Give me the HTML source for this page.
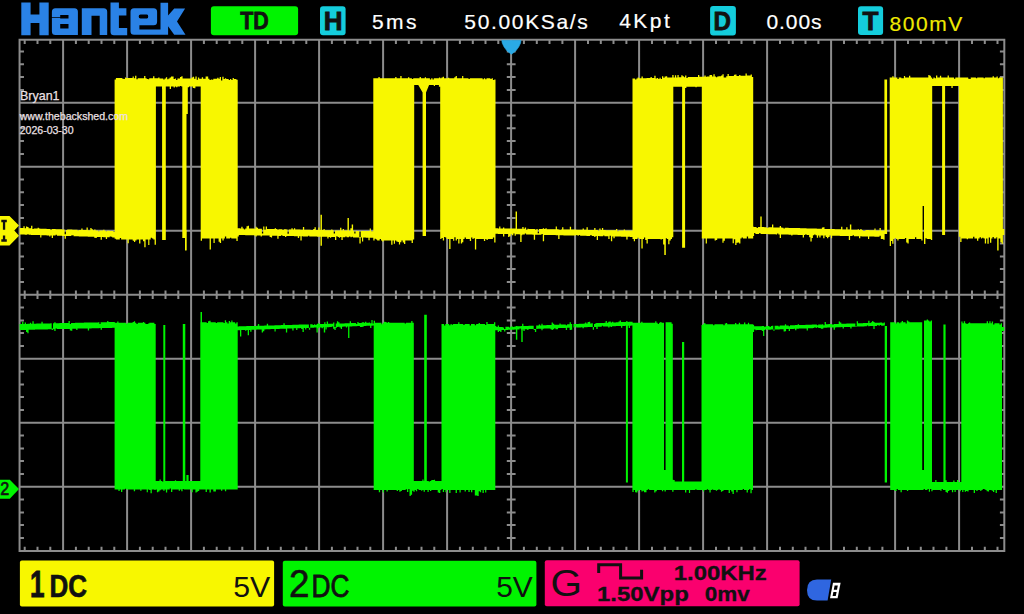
<!DOCTYPE html>
<html><head><meta charset="utf-8"><style>
html,body{margin:0;padding:0;background:#000;width:1024px;height:614px;overflow:hidden}
svg{display:block}
text{font-family:"Liberation Sans",sans-serif}
</style></head><body>
<svg width="1024" height="614" viewBox="0 0 1024 614">
<defs></defs>
<rect width="1024" height="614" fill="#000"/>
<path d="M63.1 39.8V550.9M127.1 39.8V550.9M191.1 39.8V550.9M255.1 39.8V550.9M319.1 39.8V550.9M383.1 39.8V550.9M447.1 39.8V550.9M511.1 39.8V550.9M575.1 39.8V550.9M639.1 39.8V550.9M703.1 39.8V550.9M767.1 39.8V550.9M831.1 39.8V550.9M895.1 39.8V550.9M959.1 39.8V550.9M19.56 102.8H1004.3M19.56 166.8H1004.3M19.56 230.8H1004.3M19.56 294.8H1004.3M19.56 358.8H1004.3M19.56 422.8H1004.3M19.56 486.8H1004.3M19.56 39.8H1004.3V550.9H19.56ZM24.7 39.8v4.2M24.7 550.9v-4.2M24.7 290.4v8.6M37.5 39.8v4.2M37.5 550.9v-4.2M37.5 290.4v8.6M50.3 39.8v4.2M50.3 550.9v-4.2M50.3 290.4v8.6M75.9 39.8v4.2M75.9 550.9v-4.2M75.9 290.4v8.6M88.7 39.8v4.2M88.7 550.9v-4.2M88.7 290.4v8.6M101.5 39.8v4.2M101.5 550.9v-4.2M101.5 290.4v8.6M114.3 39.8v4.2M114.3 550.9v-4.2M114.3 290.4v8.6M139.9 39.8v4.2M139.9 550.9v-4.2M139.9 290.4v8.6M152.7 39.8v4.2M152.7 550.9v-4.2M152.7 290.4v8.6M165.5 39.8v4.2M165.5 550.9v-4.2M165.5 290.4v8.6M178.3 39.8v4.2M178.3 550.9v-4.2M178.3 290.4v8.6M203.9 39.8v4.2M203.9 550.9v-4.2M203.9 290.4v8.6M216.7 39.8v4.2M216.7 550.9v-4.2M216.7 290.4v8.6M229.5 39.8v4.2M229.5 550.9v-4.2M229.5 290.4v8.6M242.3 39.8v4.2M242.3 550.9v-4.2M242.3 290.4v8.6M267.9 39.8v4.2M267.9 550.9v-4.2M267.9 290.4v8.6M280.8 39.8v4.2M280.8 550.9v-4.2M280.8 290.4v8.6M293.5 39.8v4.2M293.5 550.9v-4.2M293.5 290.4v8.6M306.3 39.8v4.2M306.3 550.9v-4.2M306.3 290.4v8.6M331.9 39.8v4.2M331.9 550.9v-4.2M331.9 290.4v8.6M344.8 39.8v4.2M344.8 550.9v-4.2M344.8 290.4v8.6M357.5 39.8v4.2M357.5 550.9v-4.2M357.5 290.4v8.6M370.3 39.8v4.2M370.3 550.9v-4.2M370.3 290.4v8.6M395.9 39.8v4.2M395.9 550.9v-4.2M395.9 290.4v8.6M408.8 39.8v4.2M408.8 550.9v-4.2M408.8 290.4v8.6M421.5 39.8v4.2M421.5 550.9v-4.2M421.5 290.4v8.6M434.3 39.8v4.2M434.3 550.9v-4.2M434.3 290.4v8.6M459.9 39.8v4.2M459.9 550.9v-4.2M459.9 290.4v8.6M472.8 39.8v4.2M472.8 550.9v-4.2M472.8 290.4v8.6M485.5 39.8v4.2M485.5 550.9v-4.2M485.5 290.4v8.6M498.3 39.8v4.2M498.3 550.9v-4.2M498.3 290.4v8.6M523.9 39.8v4.2M523.9 550.9v-4.2M523.9 290.4v8.6M536.8 39.8v4.2M536.8 550.9v-4.2M536.8 290.4v8.6M549.5 39.8v4.2M549.5 550.9v-4.2M549.5 290.4v8.6M562.4 39.8v4.2M562.4 550.9v-4.2M562.4 290.4v8.6M588.0 39.8v4.2M588.0 550.9v-4.2M588.0 290.4v8.6M600.8 39.8v4.2M600.8 550.9v-4.2M600.8 290.4v8.6M613.5 39.8v4.2M613.5 550.9v-4.2M613.5 290.4v8.6M626.4 39.8v4.2M626.4 550.9v-4.2M626.4 290.4v8.6M652.0 39.8v4.2M652.0 550.9v-4.2M652.0 290.4v8.6M664.8 39.8v4.2M664.8 550.9v-4.2M664.8 290.4v8.6M677.5 39.8v4.2M677.5 550.9v-4.2M677.5 290.4v8.6M690.4 39.8v4.2M690.4 550.9v-4.2M690.4 290.4v8.6M716.0 39.8v4.2M716.0 550.9v-4.2M716.0 290.4v8.6M728.8 39.8v4.2M728.8 550.9v-4.2M728.8 290.4v8.6M741.5 39.8v4.2M741.5 550.9v-4.2M741.5 290.4v8.6M754.4 39.8v4.2M754.4 550.9v-4.2M754.4 290.4v8.6M780.0 39.8v4.2M780.0 550.9v-4.2M780.0 290.4v8.6M792.8 39.8v4.2M792.8 550.9v-4.2M792.8 290.4v8.6M805.5 39.8v4.2M805.5 550.9v-4.2M805.5 290.4v8.6M818.4 39.8v4.2M818.4 550.9v-4.2M818.4 290.4v8.6M844.0 39.8v4.2M844.0 550.9v-4.2M844.0 290.4v8.6M856.8 39.8v4.2M856.8 550.9v-4.2M856.8 290.4v8.6M869.5 39.8v4.2M869.5 550.9v-4.2M869.5 290.4v8.6M882.4 39.8v4.2M882.4 550.9v-4.2M882.4 290.4v8.6M908.0 39.8v4.2M908.0 550.9v-4.2M908.0 290.4v8.6M920.8 39.8v4.2M920.8 550.9v-4.2M920.8 290.4v8.6M933.5 39.8v4.2M933.5 550.9v-4.2M933.5 290.4v8.6M946.4 39.8v4.2M946.4 550.9v-4.2M946.4 290.4v8.6M972.0 39.8v4.2M972.0 550.9v-4.2M972.0 290.4v8.6M984.8 39.8v4.2M984.8 550.9v-4.2M984.8 290.4v8.6M997.5 39.8v4.2M997.5 550.9v-4.2M997.5 290.4v8.6M19.56 51.5h4.4M1004.3 51.5h-4.4M506.8 51.5h8.8M19.56 64.3h4.4M1004.3 64.3h-4.4M506.8 64.3h8.8M19.56 77.1h4.4M1004.3 77.1h-4.4M506.8 77.1h8.8M19.56 89.9h4.4M1004.3 89.9h-4.4M506.8 89.9h8.8M19.56 115.5h4.4M1004.3 115.5h-4.4M506.8 115.5h8.8M19.56 128.3h4.4M1004.3 128.3h-4.4M506.8 128.3h8.8M19.56 141.1h4.4M1004.3 141.1h-4.4M506.8 141.1h8.8M19.56 153.9h4.4M1004.3 153.9h-4.4M506.8 153.9h8.8M19.56 179.6h4.4M1004.3 179.6h-4.4M506.8 179.6h8.8M19.56 192.3h4.4M1004.3 192.3h-4.4M506.8 192.3h8.8M19.56 205.1h4.4M1004.3 205.1h-4.4M506.8 205.1h8.8M19.56 217.9h4.4M1004.3 217.9h-4.4M506.8 217.9h8.8M19.56 243.6h4.4M1004.3 243.6h-4.4M506.8 243.6h8.8M19.56 256.4h4.4M1004.3 256.4h-4.4M506.8 256.4h8.8M19.56 269.1h4.4M1004.3 269.1h-4.4M506.8 269.1h8.8M19.56 281.9h4.4M1004.3 281.9h-4.4M506.8 281.9h8.8M19.56 307.6h4.4M1004.3 307.6h-4.4M506.8 307.6h8.8M19.56 320.4h4.4M1004.3 320.4h-4.4M506.8 320.4h8.8M19.56 333.1h4.4M1004.3 333.1h-4.4M506.8 333.1h8.8M19.56 345.9h4.4M1004.3 345.9h-4.4M506.8 345.9h8.8M19.56 371.6h4.4M1004.3 371.6h-4.4M506.8 371.6h8.8M19.56 384.4h4.4M1004.3 384.4h-4.4M506.8 384.4h8.8M19.56 397.1h4.4M1004.3 397.1h-4.4M506.8 397.1h8.8M19.56 409.9h4.4M1004.3 409.9h-4.4M506.8 409.9h8.8M19.56 435.6h4.4M1004.3 435.6h-4.4M506.8 435.6h8.8M19.56 448.4h4.4M1004.3 448.4h-4.4M506.8 448.4h8.8M19.56 461.1h4.4M1004.3 461.1h-4.4M506.8 461.1h8.8M19.56 474.0h4.4M1004.3 474.0h-4.4M506.8 474.0h8.8M19.56 499.6h4.4M1004.3 499.6h-4.4M506.8 499.6h8.8M19.56 512.4h4.4M1004.3 512.4h-4.4M506.8 512.4h8.8M19.56 525.1h4.4M1004.3 525.1h-4.4M506.8 525.1h8.8M19.56 538.0h4.4M1004.3 538.0h-4.4M506.8 538.0h8.8" stroke="#8c8c8c" stroke-width="2" fill="none"/>
<path d="M19.6,228.0 20.8,228.0 20.8,228.1 22.1,228.1 22.1,228.1 23.4,228.1 23.4,226.3 24.7,226.3 24.7,228.2 26.0,228.2 26.0,226.6 27.3,226.6 27.3,227.1 28.6,227.1 28.6,228.3 29.9,228.3 29.9,228.3 31.1,228.3 31.1,225.7 32.4,225.7 32.4,229.1 33.7,229.1 33.7,228.5 35.0,228.5 35.0,228.5 36.3,228.5 36.3,228.5 37.6,228.5 37.6,227.8 38.9,227.8 38.9,228.6 40.2,228.6 40.2,228.7 41.4,228.7 41.4,228.7 42.7,228.7 42.7,228.8 44.0,228.8 44.0,228.8 45.3,228.8 45.3,228.8 46.6,228.8 46.6,228.9 47.9,228.9 47.9,228.9 49.2,228.9 49.2,229.0 50.4,229.0 50.4,229.8 51.7,229.8 51.7,229.0 53.0,229.0 53.0,229.1 54.3,229.1 54.3,229.1 55.6,229.1 55.6,229.2 56.9,229.2 56.9,229.2 58.2,229.2 58.2,229.2 59.5,229.2 59.5,229.3 60.7,229.3 60.7,229.3 62.0,229.3 62.0,229.4 63.3,229.4 63.3,229.4 64.6,229.4 64.6,234.2 65.9,234.2 65.9,230.1 67.2,230.1 67.2,229.5 68.5,229.5 68.5,229.6 69.8,229.6 69.8,229.6 71.0,229.6 71.0,229.6 72.3,229.6 72.3,229.7 73.6,229.7 73.6,229.7 74.9,229.7 74.9,229.8 76.2,229.8 76.2,229.8 77.5,229.8 77.5,230.5 78.8,230.5 78.8,229.9 80.1,229.9 80.1,229.9 81.3,229.9 81.3,228.4 82.6,228.4 82.6,230.0 83.9,230.0 83.9,230.0 85.2,230.0 85.2,230.1 86.5,230.1 86.5,227.4 87.8,227.4 87.8,230.2 89.1,230.2 89.1,230.2 90.3,230.2 90.3,228.1 91.6,228.1 91.6,229.2 92.9,229.2 92.9,230.3 94.2,230.3 94.2,229.4 95.5,229.4 95.5,230.4 96.8,230.4 96.8,230.5 98.1,230.5 98.1,231.2 99.4,231.2 99.4,230.5 100.6,230.5 100.6,230.6 101.9,230.6 101.9,230.6 103.2,230.6 103.2,229.8 104.5,229.8 104.5,230.7 105.8,230.7 105.8,231.3 107.1,231.3 107.1,230.8 108.4,230.8 108.4,230.8 109.7,230.8 109.7,230.9 110.9,230.9 110.9,230.9 112.2,230.9 112.2,230.9 113.5,230.9 113.5,231.9 114.8,231.9 114.8,237.5 113.5,237.5 113.5,237.4 112.2,237.4 112.2,236.7 110.9,236.7 110.9,236.5 109.7,236.5 109.7,237.3 108.4,237.3 108.4,237.3 107.1,237.3 107.1,238.9 105.8,238.9 105.8,237.2 104.5,237.2 104.5,237.2 103.2,237.2 103.2,237.1 101.9,237.1 101.9,239.8 100.6,239.8 100.6,237.0 99.4,237.0 99.4,237.0 98.1,237.0 98.1,237.0 96.8,237.0 96.8,238.1 95.5,238.1 95.5,237.8 94.2,237.8 94.2,236.8 92.9,236.8 92.9,236.8 91.6,236.8 91.6,236.8 90.3,236.8 90.3,236.7 89.1,236.7 89.1,236.7 87.8,236.7 87.8,236.6 86.5,236.6 86.5,236.6 85.2,236.6 85.2,236.5 83.9,236.5 83.9,236.5 82.6,236.5 82.6,236.5 81.3,236.5 81.3,236.4 80.1,236.4 80.1,236.4 78.8,236.4 78.8,236.3 77.5,236.3 77.5,236.3 76.2,236.3 76.2,236.3 74.9,236.3 74.9,236.2 73.6,236.2 73.6,235.3 72.3,235.3 72.3,235.4 71.0,235.4 71.0,236.1 69.8,236.1 69.8,236.1 68.5,236.1 68.5,236.0 67.2,236.0 67.2,236.0 65.9,236.0 65.9,238.7 64.6,238.7 64.6,235.9 63.3,235.9 63.3,235.9 62.0,235.9 62.0,235.8 60.7,235.8 60.7,235.8 59.5,235.8 59.5,235.7 58.2,235.7 58.2,235.7 56.9,235.7 56.9,234.7 55.6,234.7 55.6,235.6 54.3,235.6 54.3,235.6 53.0,235.6 53.0,238.1 51.7,238.1 51.7,235.5 50.4,235.5 50.4,236.4 49.2,236.4 49.2,235.4 47.9,235.4 47.9,235.4 46.6,235.4 46.6,235.3 45.3,235.3 45.3,235.3 44.0,235.3 44.0,235.2 42.7,235.2 42.7,235.2 41.4,235.2 41.4,237.4 40.2,237.4 40.2,235.1 38.9,235.1 38.9,235.1 37.6,235.1 37.6,235.0 36.3,235.0 36.3,235.0 35.0,235.0 35.0,235.0 33.7,235.0 33.7,234.9 32.4,234.9 32.4,234.9 31.1,234.9 31.1,234.8 29.9,234.8 29.9,234.8 28.6,234.8 28.6,234.2 27.3,234.2 27.3,234.7 26.0,234.7 26.0,234.7 24.7,234.7 24.7,234.6 23.4,234.6 23.4,234.6 22.1,234.6 22.1,234.6 20.8,234.6 20.8,234.5 19.6,234.5ZM237.5,228.3 238.8,228.3 238.8,228.3 240.1,228.3 240.1,228.4 241.3,228.4 241.3,226.8 242.6,226.8 242.6,228.4 243.9,228.4 243.9,229.4 245.2,229.4 245.2,228.5 246.5,228.5 246.5,226.3 247.8,226.3 247.8,225.7 249.0,225.7 249.0,228.6 250.3,228.6 250.3,228.6 251.6,228.6 251.6,228.6 252.9,228.6 252.9,228.6 254.2,228.6 254.2,228.7 255.5,228.7 255.5,226.8 256.7,226.8 256.7,227.7 258.0,227.7 258.0,228.8 259.3,228.8 259.3,228.8 260.6,228.8 260.6,228.8 261.9,228.8 261.9,233.4 263.2,233.4 263.2,226.5 264.4,226.5 264.4,229.7 265.7,229.7 265.7,226.4 267.0,226.4 267.0,228.9 268.3,228.9 268.3,229.0 269.6,229.0 269.6,229.0 270.9,229.0 270.9,229.0 272.1,229.0 272.1,229.1 273.4,229.1 273.4,229.1 274.7,229.1 274.7,228.2 276.0,228.2 276.0,229.1 277.3,229.1 277.3,229.8 278.6,229.8 278.6,229.2 279.8,229.2 279.8,229.2 281.1,229.2 281.1,229.2 282.4,229.2 282.4,230.0 283.7,230.0 283.7,229.3 285.0,229.3 285.0,229.3 286.3,229.3 286.3,229.4 287.5,229.4 287.5,233.8 288.8,233.8 288.8,229.4 290.1,229.4 290.1,229.4 291.4,229.4 291.4,228.2 292.7,228.2 292.7,229.5 294.0,229.5 294.0,228.2 295.2,228.2 295.2,229.5 296.5,229.5 296.5,229.6 297.8,229.6 297.8,229.6 299.1,229.6 299.1,229.6 300.4,229.6 300.4,229.7 301.7,229.7 301.7,229.7 302.9,229.7 302.9,227.1 304.2,227.1 304.2,229.7 305.5,229.7 305.5,229.8 306.8,229.8 306.8,229.8 308.1,229.8 308.1,229.8 309.3,229.8 309.3,229.8 310.6,229.8 310.6,229.9 311.9,229.9 311.9,229.9 313.2,229.9 313.2,229.0 314.5,229.0 314.5,227.3 315.8,227.3 315.8,230.0 317.0,230.0 317.0,230.0 318.3,230.0 318.3,227.5 319.6,227.5 319.6,230.1 320.9,230.1 320.9,230.1 322.2,230.1 322.2,230.1 323.5,230.1 323.5,228.9 324.7,228.9 324.7,230.2 326.0,230.2 326.0,230.2 327.3,230.2 327.3,230.2 328.6,230.2 328.6,230.3 329.9,230.3 329.9,230.3 331.2,230.3 331.2,229.4 332.4,229.4 332.4,230.3 333.7,230.3 333.7,233.4 335.0,233.4 335.0,230.4 336.3,230.4 336.3,230.4 337.6,230.4 337.6,230.4 338.9,230.4 338.9,230.5 340.1,230.5 340.1,227.8 341.4,227.8 341.4,230.5 342.7,230.5 342.7,228.9 344.0,228.9 344.0,230.6 345.3,230.6 345.3,230.6 346.6,230.6 346.6,230.6 347.8,230.6 347.8,230.7 349.1,230.7 349.1,230.7 350.4,230.7 350.4,228.2 351.7,228.2 351.7,230.7 353.0,230.7 353.0,230.8 354.3,230.8 354.3,233.6 355.5,233.6 355.5,230.8 356.8,230.8 356.8,230.9 358.1,230.9 358.1,230.9 359.4,230.9 359.4,236.9 360.7,236.9 360.7,230.9 362.0,230.9 362.0,231.0 363.2,231.0 363.2,231.0 364.5,231.0 364.5,231.0 365.8,231.0 365.8,231.0 367.1,231.0 367.1,231.1 368.4,231.1 368.4,231.1 369.7,231.1 369.7,228.5 370.9,228.5 370.9,231.2 372.2,231.2 372.2,231.2 373.5,231.2 373.5,237.8 372.2,237.8 372.2,237.8 370.9,237.8 370.9,237.7 369.7,237.7 369.7,240.2 368.4,240.2 368.4,237.7 367.1,237.7 367.1,237.7 365.8,237.7 365.8,237.6 364.5,237.6 364.5,237.6 363.2,237.6 363.2,241.4 362.0,241.4 362.0,237.5 360.7,237.5 360.7,243.5 359.4,243.5 359.4,237.5 358.1,237.5 358.1,237.5 356.8,237.5 356.8,237.4 355.5,237.4 355.5,237.4 354.3,237.4 354.3,237.4 353.0,237.4 353.0,236.7 351.7,236.7 351.7,237.3 350.4,237.3 350.4,236.5 349.1,236.5 349.1,237.3 347.8,237.3 347.8,237.3 346.6,237.3 346.6,236.4 345.3,236.4 345.3,237.2 344.0,237.2 344.0,237.2 342.7,237.2 342.7,240.1 341.4,240.1 341.4,237.1 340.1,237.1 340.1,237.7 338.9,237.7 338.9,237.1 337.6,237.1 337.6,236.2 336.3,236.2 336.3,239.9 335.0,239.9 335.0,237.0 333.7,237.0 333.7,237.0 332.4,237.0 332.4,236.9 331.2,236.9 331.2,237.7 329.9,237.7 329.9,236.9 328.6,236.9 328.6,238.4 327.3,238.4 327.3,236.8 326.0,236.8 326.0,236.8 324.7,236.8 324.7,236.8 323.5,236.8 323.5,236.8 322.2,236.8 322.2,236.7 320.9,236.7 320.9,236.7 319.6,236.7 319.6,236.7 318.3,236.7 318.3,236.7 317.0,236.7 317.0,236.6 315.8,236.6 315.8,236.6 314.5,236.6 314.5,236.6 313.2,236.6 313.2,236.5 311.9,236.5 311.9,236.5 310.6,236.5 310.6,236.5 309.3,236.5 309.3,235.7 308.1,235.7 308.1,236.4 306.8,236.4 306.8,236.4 305.5,236.4 305.5,236.4 304.2,236.4 304.2,236.4 302.9,236.4 302.9,236.3 301.7,236.3 301.7,240.4 300.4,240.4 300.4,236.3 299.1,236.3 299.1,238.1 297.8,238.1 297.8,236.2 296.5,236.2 296.5,236.2 295.2,236.2 295.2,236.2 294.0,236.2 294.0,236.1 292.7,236.1 292.7,236.1 291.4,236.1 291.4,236.1 290.1,236.1 290.1,236.1 288.8,236.1 288.8,236.0 287.5,236.0 287.5,236.0 286.3,236.0 286.3,237.0 285.0,237.0 285.0,236.0 283.7,236.0 283.7,235.9 282.4,235.9 282.4,235.2 281.1,235.2 281.1,235.9 279.8,235.9 279.8,235.9 278.6,235.9 278.6,238.8 277.3,238.8 277.3,235.8 276.0,235.8 276.0,235.8 274.7,235.8 274.7,235.8 273.4,235.8 273.4,235.7 272.1,235.7 272.1,237.5 270.9,237.5 270.9,236.9 269.6,236.9 269.6,235.6 268.3,235.6 268.3,235.6 267.0,235.6 267.0,235.6 265.7,235.6 265.7,235.6 264.4,235.6 264.4,235.5 263.2,235.5 263.2,235.5 261.9,235.5 261.9,236.6 260.6,236.6 260.6,235.5 259.3,235.5 259.3,235.4 258.0,235.4 258.0,235.4 256.7,235.4 256.7,236.4 255.5,236.4 255.5,235.4 254.2,235.4 254.2,235.3 252.9,235.3 252.9,235.3 251.6,235.3 251.6,235.3 250.3,235.3 250.3,235.3 249.0,235.3 249.0,235.2 247.8,235.2 247.8,235.2 246.5,235.2 246.5,235.2 245.2,235.2 245.2,235.1 243.9,235.1 243.9,235.1 242.6,235.1 242.6,235.1 241.3,235.1 241.3,235.1 240.1,235.1 240.1,235.0 238.8,235.0 238.8,236.5 237.5,236.5ZM495.3,228.3 496.6,228.3 496.6,228.3 497.9,228.3 497.9,228.4 499.2,228.4 499.2,226.4 500.4,226.4 500.4,228.4 501.7,228.4 501.7,228.4 503.0,228.4 503.0,227.6 504.3,227.6 504.3,228.5 505.6,228.5 505.6,228.5 506.9,228.5 506.9,228.5 508.1,228.5 508.1,228.5 509.4,228.5 509.4,228.5 510.7,228.5 510.7,228.6 512.0,228.6 512.0,228.6 513.3,228.6 513.3,228.6 514.6,228.6 514.6,228.6 515.8,228.6 515.8,229.6 517.1,229.6 517.1,228.7 518.4,228.7 518.4,228.7 519.7,228.7 519.7,228.7 521.0,228.7 521.0,228.7 522.3,228.7 522.3,227.0 523.6,227.0 523.6,228.8 524.8,228.8 524.8,227.5 526.1,227.5 526.1,229.8 527.4,229.8 527.4,228.8 528.7,228.8 528.7,228.9 530.0,228.9 530.0,228.9 531.3,228.9 531.3,228.9 532.5,228.9 532.5,228.9 533.8,228.9 533.8,229.0 535.1,229.0 535.1,229.7 536.4,229.7 536.4,229.0 537.7,229.0 537.7,233.2 539.0,233.2 539.0,229.0 540.2,229.0 540.2,229.1 541.5,229.1 541.5,229.1 542.8,229.1 542.8,228.3 544.1,228.3 544.1,229.1 545.4,229.1 545.4,228.2 546.7,228.2 546.7,229.2 547.9,229.2 547.9,229.2 549.2,229.2 549.2,229.2 550.5,229.2 550.5,229.2 551.8,229.2 551.8,229.3 553.1,229.3 553.1,229.3 554.4,229.3 554.4,229.3 555.7,229.3 555.7,226.6 556.9,226.6 556.9,229.3 558.2,229.3 558.2,229.4 559.5,229.4 559.5,230.0 560.8,230.0 560.8,229.4 562.1,229.4 562.1,227.3 563.4,227.3 563.4,229.4 564.6,229.4 564.6,229.5 565.9,229.5 565.9,229.5 567.2,229.5 567.2,229.5 568.5,229.5 568.5,229.5 569.8,229.5 569.8,226.7 571.1,226.7 571.1,229.6 572.3,229.6 572.3,229.6 573.6,229.6 573.6,229.6 574.9,229.6 574.9,229.6 576.2,229.6 576.2,229.7 577.5,229.7 577.5,229.7 578.8,229.7 578.8,229.7 580.1,229.7 580.1,229.7 581.3,229.7 581.3,229.8 582.6,229.8 582.6,228.6 583.9,228.6 583.9,229.8 585.2,229.8 585.2,229.8 586.5,229.8 586.5,227.2 587.8,227.2 587.8,229.9 589.0,229.9 589.0,229.9 590.3,229.9 590.3,229.9 591.6,229.9 591.6,229.9 592.9,229.9 592.9,229.9 594.2,229.9 594.2,227.9 595.5,227.9 595.5,230.0 596.7,230.0 596.7,230.0 598.0,230.0 598.0,230.8 599.3,230.8 599.3,228.4 600.6,228.4 600.6,230.1 601.9,230.1 601.9,228.0 603.2,228.0 603.2,230.1 604.4,230.1 604.4,230.1 605.7,230.1 605.7,230.2 607.0,230.2 607.0,230.2 608.3,230.2 608.3,230.2 609.6,230.2 609.6,230.2 610.9,230.2 610.9,230.2 612.2,230.2 612.2,230.3 613.4,230.3 613.4,230.3 614.7,230.3 614.7,230.3 616.0,230.3 616.0,228.9 617.3,228.9 617.3,231.3 618.6,231.3 618.6,230.4 619.9,230.4 619.9,230.4 621.1,230.4 621.1,230.4 622.4,230.4 622.4,230.4 623.7,230.4 623.7,229.4 625.0,229.4 625.0,230.5 626.3,230.5 626.3,230.5 627.6,230.5 627.6,230.5 628.8,230.5 628.8,230.5 630.1,230.5 630.1,230.6 631.4,230.6 631.4,230.6 632.7,230.6 632.7,236.9 631.4,236.9 631.4,236.9 630.1,236.9 630.1,236.8 628.8,236.8 628.8,236.8 627.6,236.8 627.6,239.5 626.3,239.5 626.3,236.7 625.0,236.7 625.0,236.7 623.7,236.7 623.7,236.7 622.4,236.7 622.4,236.7 621.1,236.7 621.1,236.6 619.9,236.6 619.9,236.6 618.6,236.6 618.6,236.6 617.3,236.6 617.3,236.5 616.0,236.5 616.0,236.5 614.7,236.5 614.7,238.3 613.4,238.3 613.4,236.5 612.2,236.5 612.2,241.3 610.9,241.3 610.9,235.7 609.6,235.7 609.6,238.9 608.3,238.9 608.3,236.3 607.0,236.3 607.0,236.3 605.7,236.3 605.7,236.3 604.4,236.3 604.4,235.5 603.2,235.5 603.2,236.2 601.9,236.2 601.9,236.2 600.6,236.2 600.6,236.2 599.3,236.2 599.3,236.1 598.0,236.1 598.0,240.0 596.7,240.0 596.7,236.1 595.5,236.1 595.5,236.9 594.2,236.9 594.2,236.0 592.9,236.0 592.9,236.0 591.6,236.0 591.6,235.0 590.3,235.0 590.3,235.9 589.0,235.9 589.0,235.9 587.8,235.9 587.8,235.9 586.5,235.9 586.5,235.8 585.2,235.8 585.2,235.8 583.9,235.8 583.9,235.8 582.6,235.8 582.6,235.8 581.3,235.8 581.3,235.7 580.1,235.7 580.1,235.1 578.8,235.1 578.8,235.7 577.5,235.7 577.5,235.0 576.2,235.0 576.2,235.6 574.9,235.6 574.9,235.6 573.6,235.6 573.6,235.6 572.3,235.6 572.3,235.5 571.1,235.5 571.1,235.5 569.8,235.5 569.8,235.5 568.5,235.5 568.5,235.4 567.2,235.4 567.2,235.4 565.9,235.4 565.9,235.4 564.6,235.4 564.6,235.4 563.4,235.4 563.4,235.3 562.1,235.3 562.1,235.3 560.8,235.3 560.8,235.3 559.5,235.3 559.5,239.1 558.2,239.1 558.2,235.2 556.9,235.2 556.9,235.2 555.7,235.2 555.7,235.1 554.4,235.1 554.4,235.1 553.1,235.1 553.1,235.1 551.8,235.1 551.8,235.1 550.5,235.1 550.5,235.0 549.2,235.0 549.2,235.0 547.9,235.0 547.9,235.0 546.7,235.0 546.7,234.9 545.4,234.9 545.4,234.9 544.1,234.9 544.1,241.2 542.8,241.2 542.8,233.9 541.5,233.9 541.5,234.8 540.2,234.8 540.2,234.8 539.0,234.8 539.0,234.8 537.7,234.8 537.7,234.7 536.4,234.7 536.4,234.7 535.1,234.7 535.1,239.8 533.8,239.8 533.8,234.7 532.5,234.7 532.5,234.6 531.3,234.6 531.3,234.6 530.0,234.6 530.0,234.6 528.7,234.6 528.7,234.5 527.4,234.5 527.4,234.5 526.1,234.5 526.1,233.6 524.8,233.6 524.8,234.5 523.6,234.5 523.6,234.4 522.3,234.4 522.3,235.2 521.0,235.2 521.0,234.4 519.7,234.4 519.7,234.3 518.4,234.3 518.4,234.3 517.1,234.3 517.1,234.3 515.8,234.3 515.8,235.7 514.6,235.7 514.6,233.6 513.3,233.6 513.3,235.3 512.0,235.3 512.0,234.2 510.7,234.2 510.7,236.2 509.4,236.2 509.4,237.0 508.1,237.0 508.1,234.1 506.9,234.1 506.9,234.0 505.6,234.0 505.6,234.0 504.3,234.0 504.3,236.4 503.0,236.4 503.0,234.0 501.7,234.0 501.7,233.9 500.4,233.9 500.4,233.9 499.2,233.9 499.2,233.9 497.9,233.9 497.9,233.8 496.6,233.8 496.6,233.8 495.3,233.8ZM752.8,226.8 754.1,226.8 754.1,226.9 755.4,226.9 755.4,226.9 756.6,226.9 756.6,227.9 757.9,227.9 757.9,227.0 759.2,227.0 759.2,227.0 760.5,227.0 760.5,227.0 761.8,227.0 761.8,227.1 763.0,227.1 763.0,227.1 764.3,227.1 764.3,227.2 765.6,227.2 765.6,227.2 766.9,227.2 766.9,227.9 768.2,227.9 768.2,227.3 769.4,227.3 769.4,227.3 770.7,227.3 770.7,227.3 772.0,227.3 772.0,224.5 773.3,224.5 773.3,227.4 774.6,227.4 774.6,227.4 775.8,227.4 775.8,227.5 777.1,227.5 777.1,227.5 778.4,227.5 778.4,227.6 779.7,227.6 779.7,226.0 781.0,226.0 781.0,227.6 782.2,227.6 782.2,227.7 783.5,227.7 783.5,228.5 784.8,228.5 784.8,227.7 786.1,227.7 786.1,227.8 787.3,227.8 787.3,227.8 788.6,227.8 788.6,227.9 789.9,227.9 789.9,227.9 791.2,227.9 791.2,227.9 792.5,227.9 792.5,228.0 793.7,228.0 793.7,228.0 795.0,228.0 795.0,228.0 796.3,228.0 796.3,228.1 797.6,228.1 797.6,228.1 798.9,228.1 798.9,228.1 800.1,228.1 800.1,228.2 801.4,228.2 801.4,228.2 802.7,228.2 802.7,228.3 804.0,228.3 804.0,228.3 805.3,228.3 805.3,228.3 806.5,228.3 806.5,228.4 807.8,228.4 807.8,228.4 809.1,228.4 809.1,228.4 810.4,228.4 810.4,228.5 811.7,228.5 811.7,228.5 812.9,228.5 812.9,228.6 814.2,228.6 814.2,228.6 815.5,228.6 815.5,228.6 816.8,228.6 816.8,228.7 818.1,228.7 818.1,228.7 819.3,228.7 819.3,228.7 820.6,228.7 820.6,228.8 821.9,228.8 821.9,227.6 823.2,227.6 823.2,227.2 824.5,227.2 824.5,228.9 825.7,228.9 825.7,228.9 827.0,228.9 827.0,229.0 828.3,229.0 828.3,229.0 829.6,229.0 829.6,229.0 830.9,229.0 830.9,229.1 832.1,229.1 832.1,229.1 833.4,229.1 833.4,229.1 834.7,229.1 834.7,229.2 836.0,229.2 836.0,229.2 837.3,229.2 837.3,229.3 838.5,229.3 838.5,229.3 839.8,229.3 839.8,229.3 841.1,229.3 841.1,226.8 842.4,226.8 842.4,229.4 843.7,229.4 843.7,229.4 844.9,229.4 844.9,229.5 846.2,229.5 846.2,227.2 847.5,227.2 847.5,229.5 848.8,229.5 848.8,229.6 850.1,229.6 850.1,229.6 851.3,229.6 851.3,229.7 852.6,229.7 852.6,229.7 853.9,229.7 853.9,229.7 855.2,229.7 855.2,229.8 856.4,229.8 856.4,229.8 857.7,229.8 857.7,229.2 859.0,229.2 859.0,229.9 860.3,229.9 860.3,229.0 861.6,229.0 861.6,230.0 862.8,230.0 862.8,231.0 864.1,231.0 864.1,231.0 865.4,231.0 865.4,230.1 866.7,230.1 866.7,230.1 868.0,230.1 868.0,230.1 869.2,230.1 869.2,230.2 870.5,230.2 870.5,230.2 871.8,230.2 871.8,230.2 873.1,230.2 873.1,230.3 874.4,230.3 874.4,228.5 875.6,228.5 875.6,230.4 876.9,230.4 876.9,230.4 878.2,230.4 878.2,230.4 879.5,230.4 879.5,227.9 880.8,227.9 880.8,230.5 882.0,230.5 882.0,230.5 883.3,230.5 883.3,230.6 884.6,230.6 884.6,239.8 883.3,239.8 883.3,238.9 882.0,238.9 882.0,238.9 880.8,238.9 880.8,235.8 879.5,235.8 879.5,236.8 878.2,236.8 878.2,236.7 876.9,236.7 876.9,236.7 875.6,236.7 875.6,236.7 874.4,236.7 874.4,236.6 873.1,236.6 873.1,236.6 871.8,236.6 871.8,236.6 870.5,236.6 870.5,236.6 869.2,236.6 869.2,239.1 868.0,239.1 868.0,236.5 866.7,236.5 866.7,236.5 865.4,236.5 865.4,236.4 864.1,236.4 864.1,236.4 862.8,236.4 862.8,236.4 861.6,236.4 861.6,236.3 860.3,236.3 860.3,238.2 859.0,238.2 859.0,236.3 857.7,236.3 857.7,236.3 856.4,236.3 856.4,236.2 855.2,236.2 855.2,236.2 853.9,236.2 853.9,235.2 852.6,235.2 852.6,236.1 851.3,236.1 851.3,236.1 850.1,236.1 850.1,240.0 848.8,240.0 848.8,236.0 847.5,236.0 847.5,236.0 846.2,236.0 846.2,236.0 844.9,236.0 844.9,236.0 843.7,236.0 843.7,235.9 842.4,235.9 842.4,235.9 841.1,235.9 841.1,235.9 839.8,235.9 839.8,235.8 838.5,235.8 838.5,235.8 837.3,235.8 837.3,235.8 836.0,235.8 836.0,235.7 834.7,235.7 834.7,235.7 833.4,235.7 833.4,235.7 832.1,235.7 832.1,238.2 830.9,238.2 830.9,235.6 829.6,235.6 829.6,237.1 828.3,237.1 828.3,238.2 827.0,238.2 827.0,236.9 825.7,236.9 825.7,235.5 824.5,235.5 824.5,238.3 823.2,238.3 823.2,235.4 821.9,235.4 821.9,235.4 820.6,235.4 820.6,237.5 819.3,237.5 819.3,235.4 818.1,235.4 818.1,237.8 816.8,237.8 816.8,235.3 815.5,235.3 815.5,234.4 814.2,234.4 814.2,235.2 812.9,235.2 812.9,238.1 811.7,238.1 811.7,241.5 810.4,241.5 810.4,237.3 809.1,237.3 809.1,235.1 807.8,235.1 807.8,235.1 806.5,235.1 806.5,234.3 805.3,234.3 805.3,235.0 804.0,235.0 804.0,237.5 802.7,237.5 802.7,235.0 801.4,235.0 801.4,234.9 800.1,234.9 800.1,234.9 798.9,234.9 798.9,234.9 797.6,234.9 797.6,234.8 796.3,234.8 796.3,234.8 795.0,234.8 795.0,234.8 793.7,234.8 793.7,234.7 792.5,234.7 792.5,235.4 791.2,235.4 791.2,234.7 789.9,234.7 789.9,234.7 788.6,234.7 788.6,234.6 787.3,234.6 787.3,234.6 786.1,234.6 786.1,234.6 784.8,234.6 784.8,234.5 783.5,234.5 783.5,234.5 782.2,234.5 782.2,234.5 781.0,234.5 781.0,238.0 779.7,238.0 779.7,234.4 778.4,234.4 778.4,233.5 777.1,233.5 777.1,234.4 775.8,234.4 775.8,234.3 774.6,234.3 774.6,234.3 773.3,234.3 773.3,234.3 772.0,234.3 772.0,234.2 770.7,234.2 770.7,234.2 769.4,234.2 769.4,234.2 768.2,234.2 768.2,234.1 766.9,234.1 766.9,234.1 765.6,234.1 765.6,234.1 764.3,234.1 764.3,234.1 763.0,234.1 763.0,234.0 761.8,234.0 761.8,234.0 760.5,234.0 760.5,233.1 759.2,233.1 759.2,233.9 757.9,233.9 757.9,233.9 756.6,233.9 756.6,233.9 755.4,233.9 755.4,233.0 754.1,233.0 754.1,235.9 752.8,235.9ZM1002.5,229.0 1004.3,229.0 1004.3,235.0 1002.5,235.0ZM114.6,79.4 115.9,79.4 115.9,78.0 117.2,78.0 117.2,78.0 118.4,78.0 118.4,78.0 119.7,78.0 119.7,78.0 121.0,78.0 121.0,78.1 122.3,78.1 122.3,78.7 123.6,78.7 123.6,78.9 124.9,78.9 124.9,77.4 126.1,77.4 126.1,78.1 127.4,78.1 127.4,78.1 128.7,78.1 128.7,78.1 130.0,78.1 130.0,78.1 131.3,78.1 131.3,78.1 132.6,78.1 132.6,76.5 133.8,76.5 133.8,78.2 135.1,78.2 135.1,75.8 136.4,75.8 136.4,79.3 137.7,79.3 137.7,78.2 139.0,78.2 139.0,78.2 140.2,78.2 140.2,78.2 141.5,78.2 141.5,78.2 142.8,78.2 142.8,78.2 144.1,78.2 144.1,75.9 145.4,75.9 145.4,78.3 146.7,78.3 146.7,78.9 147.9,78.9 147.9,79.2 149.2,79.2 149.2,78.3 150.5,78.3 150.5,78.3 151.8,78.3 151.8,78.3 153.1,78.3 153.1,76.3 154.4,76.3 154.4,78.3 155.6,78.3 155.6,78.3 156.9,78.3 156.9,78.3 158.2,78.3 158.2,77.5 159.5,77.5 159.5,78.4 160.8,78.4 160.8,78.4 162.0,78.4 162.0,78.4 163.3,78.4 163.3,79.6 164.6,79.6 164.6,78.4 165.9,78.4 165.9,77.2 167.2,77.2 167.2,79.2 168.5,79.2 168.5,78.4 169.7,78.4 169.7,77.4 171.0,77.4 171.0,76.6 172.3,76.6 172.3,76.6 173.6,76.6 173.6,79.1 174.9,79.1 174.9,78.5 176.1,78.5 176.1,80.0 177.4,80.0 177.4,78.5 178.7,78.5 178.7,78.5 180.0,78.5 180.0,77.1 181.3,77.1 181.3,76.3 182.6,76.3 182.6,78.6 183.8,78.6 183.8,78.6 185.1,78.6 185.1,78.6 186.4,78.6 186.4,78.6 187.7,78.6 187.7,78.6 189.0,78.6 189.0,78.6 190.3,78.6 190.3,78.6 191.5,78.6 191.5,77.6 192.8,77.6 192.8,76.8 194.1,76.8 194.1,78.7 195.4,78.7 195.4,76.5 196.7,76.5 196.7,79.7 197.9,79.7 197.9,77.6 199.2,77.6 199.2,78.7 200.5,78.7 200.5,78.7 201.8,78.7 201.8,77.2 203.1,77.2 203.1,78.7 204.4,78.7 204.4,78.7 205.6,78.7 205.6,76.4 206.9,76.4 206.9,76.5 208.2,76.5 208.2,78.8 209.5,78.8 209.5,79.9 210.8,79.9 210.8,79.6 212.1,79.6 212.1,79.8 213.3,79.8 213.3,78.8 214.6,78.8 214.6,78.8 215.9,78.8 215.9,78.8 217.2,78.8 217.2,77.7 218.5,77.7 218.5,78.8 219.7,78.8 219.7,77.0 221.0,77.0 221.0,80.4 222.3,80.4 222.3,76.8 223.6,76.8 223.6,78.9 224.9,78.9 224.9,78.3 226.2,78.3 226.2,78.9 227.4,78.9 227.4,78.9 228.7,78.9 228.7,80.0 230.0,80.0 230.0,78.9 231.3,78.9 231.3,80.1 232.6,80.1 232.6,78.0 233.9,78.0 233.9,79.0 235.1,79.0 235.1,79.0 236.4,79.0 236.4,79.7 237.7,79.7 237.7,86.5 236.4,86.5 236.4,87.9 235.1,87.9 235.1,86.5 233.9,86.5 233.9,86.5 232.6,86.5 232.6,86.5 231.3,86.5 231.3,86.5 230.0,86.5 230.0,86.5 228.7,86.5 228.7,86.5 227.4,86.5 227.4,86.5 226.2,86.5 226.2,88.1 224.9,88.1 224.9,86.5 223.6,86.5 223.6,86.5 222.3,86.5 222.3,86.5 221.0,86.5 221.0,86.5 219.7,86.5 219.7,86.5 218.5,86.5 218.5,86.5 217.2,86.5 217.2,86.5 215.9,86.5 215.9,86.5 214.6,86.5 214.6,86.5 213.3,86.5 213.3,86.5 212.1,86.5 212.1,86.5 210.8,86.5 210.8,86.5 209.5,86.5 209.5,86.5 208.2,86.5 208.2,86.5 206.9,86.5 206.9,86.5 205.6,86.5 205.6,86.5 204.4,86.5 204.4,86.5 203.1,86.5 203.1,86.5 201.8,86.5 201.8,86.5 200.5,86.5 200.5,86.5 199.2,86.5 199.2,86.5 197.9,86.5 197.9,86.5 196.7,86.5 196.7,86.5 195.4,86.5 195.4,88.2 194.1,88.2 194.1,87.9 192.8,87.9 192.8,86.5 191.5,86.5 191.5,86.5 190.3,86.5 190.3,86.5 189.0,86.5 189.0,87.3 187.7,87.3 187.7,86.5 186.4,86.5 186.4,88.8 185.1,88.8 185.1,86.5 183.8,86.5 183.8,86.5 182.6,86.5 182.6,86.5 181.3,86.5 181.3,86.0 180.0,86.0 180.0,86.5 178.7,86.5 178.7,86.5 177.4,86.5 177.4,87.3 176.1,87.3 176.1,86.5 174.9,86.5 174.9,87.6 173.6,87.6 173.6,86.5 172.3,86.5 172.3,86.5 171.0,86.5 171.0,88.9 169.7,88.9 169.7,86.5 168.5,86.5 168.5,86.5 167.2,86.5 167.2,86.5 165.9,86.5 165.9,86.5 164.6,86.5 164.6,86.5 163.3,86.5 163.3,88.8 162.0,88.8 162.0,86.5 160.8,86.5 160.8,86.5 159.5,86.5 159.5,86.5 158.2,86.5 158.2,86.5 156.9,86.5 156.9,86.5 155.6,86.5 155.6,86.5 154.4,86.5 154.4,88.5 153.1,88.5 153.1,86.5 151.8,86.5 151.8,86.5 150.5,86.5 150.5,86.0 149.2,86.0 149.2,86.5 147.9,86.5 147.9,86.5 146.7,86.5 146.7,86.5 145.4,86.5 145.4,86.5 144.1,86.5 144.1,86.5 142.8,86.5 142.8,86.5 141.5,86.5 141.5,86.5 140.2,86.5 140.2,86.5 139.0,86.5 139.0,86.5 137.7,86.5 137.7,86.0 136.4,86.0 136.4,86.5 135.1,86.5 135.1,86.5 133.8,86.5 133.8,86.5 132.6,86.5 132.6,86.5 131.3,86.5 131.3,88.6 130.0,88.6 130.0,86.5 128.7,86.5 128.7,86.5 127.4,86.5 127.4,88.5 126.1,88.5 126.1,86.5 124.9,86.5 124.9,86.5 123.6,86.5 123.6,86.5 122.3,86.5 122.3,86.5 121.0,86.5 121.0,86.5 119.7,86.5 119.7,86.5 118.4,86.5 118.4,86.5 117.2,86.5 117.2,86.5 115.9,86.5 115.9,88.3 114.6,88.3ZM114.6,84.0 155.9,84.0 155.9,244.8 154.6,244.8 154.6,239.5 153.3,239.5 153.3,238.4 152.0,238.4 152.0,237.7 150.7,237.7 150.7,239.5 149.4,239.5 149.4,244.9 148.2,244.9 148.2,239.5 146.9,239.5 146.9,239.5 145.6,239.5 145.6,247.3 144.3,247.3 144.3,241.2 143.0,241.2 143.0,239.5 141.7,239.5 141.7,239.5 140.4,239.5 140.4,243.6 139.1,243.6 139.1,239.5 137.8,239.5 137.8,239.5 136.5,239.5 136.5,240.5 135.2,240.5 135.2,242.1 134.0,242.1 134.0,240.7 132.7,240.7 132.7,239.5 131.4,239.5 131.4,239.5 130.1,239.5 130.1,239.5 128.8,239.5 128.8,243.3 127.5,243.3 127.5,239.5 126.2,239.5 126.2,239.5 124.9,239.5 124.9,239.5 123.6,239.5 123.6,239.5 122.3,239.5 122.3,239.5 121.1,239.5 121.1,238.0 119.8,238.0 119.8,239.5 118.5,239.5 118.5,239.5 117.2,239.5 117.2,239.5 115.9,239.5 115.9,238.7 114.6,238.7ZM200.7,84.0 237.7,84.0 237.7,240.9 236.4,240.9 236.4,238.5 235.1,238.5 235.1,238.5 233.9,238.5 233.9,238.5 232.6,238.5 232.6,238.5 231.3,238.5 231.3,237.8 230.0,237.8 230.0,238.5 228.8,238.5 228.8,238.5 227.5,238.5 227.5,238.5 226.2,238.5 226.2,236.6 224.9,236.6 224.9,238.5 223.7,238.5 223.7,240.6 222.4,240.6 222.4,238.5 221.1,238.5 221.1,243.0 219.8,243.0 219.8,241.8 218.6,241.8 218.6,238.5 217.3,238.5 217.3,238.5 216.0,238.5 216.0,238.5 214.7,238.5 214.7,242.9 213.5,242.9 213.5,238.5 212.2,238.5 212.2,238.5 210.9,238.5 210.9,249.4 209.6,249.4 209.6,238.5 208.4,238.5 208.4,238.5 207.1,238.5 207.1,238.5 205.8,238.5 205.8,238.5 204.5,238.5 204.5,238.5 203.3,238.5 203.3,238.5 202.0,238.5 202.0,240.8 200.7,240.8ZM162.1,84.0H165.8V240.0H162.1ZM182.3,84.0H186.5V238.0H182.3ZM182.3,84.0H187.8V114.0H182.3ZM417.7,84H429.5L426,92.6H422.6ZM185.0,230.0H186.6V250.5H185.0ZM373.3,78.3 374.6,78.3 374.6,78.3 375.9,78.3 375.9,78.3 377.2,78.3 377.2,78.3 378.4,78.3 378.4,77.0 379.7,77.0 379.7,78.3 381.0,78.3 381.0,78.3 382.3,78.3 382.3,78.3 383.6,78.3 383.6,78.3 384.9,78.3 384.9,78.3 386.2,78.3 386.2,78.3 387.4,78.3 387.4,78.3 388.7,78.3 388.7,78.3 390.0,78.3 390.0,78.3 391.3,78.3 391.3,78.3 392.6,78.3 392.6,78.3 393.9,78.3 393.9,78.3 395.2,78.3 395.2,77.1 396.5,77.1 396.5,78.3 397.7,78.3 397.7,78.3 399.0,78.3 399.0,78.3 400.3,78.3 400.3,76.1 401.6,76.1 401.6,78.3 402.9,78.3 402.9,78.3 404.2,78.3 404.2,78.3 405.5,78.3 405.5,78.3 406.7,78.3 406.7,78.3 408.0,78.3 408.0,77.2 409.3,77.2 409.3,78.3 410.6,78.3 410.6,78.3 411.9,78.3 411.9,79.1 413.2,79.1 413.2,78.3 414.5,78.3 414.5,78.3 415.7,78.3 415.7,78.3 417.0,78.3 417.0,78.3 418.3,78.3 418.3,78.3 419.6,78.3 419.6,77.0 420.9,77.0 420.9,78.3 422.2,78.3 422.2,78.3 423.5,78.3 423.5,78.3 424.8,78.3 424.8,77.2 426.0,77.2 426.0,78.3 427.3,78.3 427.3,78.3 428.6,78.3 428.6,78.3 429.9,78.3 429.9,79.4 431.2,79.4 431.2,78.3 432.5,78.3 432.5,79.5 433.8,79.5 433.8,78.3 435.0,78.3 435.0,78.3 436.3,78.3 436.3,78.3 437.6,78.3 437.6,78.3 438.9,78.3 438.9,77.4 440.2,77.4 440.2,78.3 441.5,78.3 441.5,77.5 442.8,77.5 442.8,76.8 444.0,76.8 444.0,78.3 445.3,78.3 445.3,78.3 446.6,78.3 446.6,78.3 447.9,78.3 447.9,77.7 449.2,77.7 449.2,78.3 450.5,78.3 450.5,78.3 451.8,78.3 451.8,78.3 453.1,78.3 453.1,78.3 454.3,78.3 454.3,77.2 455.6,77.2 455.6,76.1 456.9,76.1 456.9,78.3 458.2,78.3 458.2,78.3 459.5,78.3 459.5,78.3 460.8,78.3 460.8,78.3 462.1,78.3 462.1,76.1 463.3,76.1 463.3,78.3 464.6,78.3 464.6,78.3 465.9,78.3 465.9,78.3 467.2,78.3 467.2,78.3 468.5,78.3 468.5,78.9 469.8,78.9 469.8,78.3 471.1,78.3 471.1,78.3 472.3,78.3 472.3,78.3 473.6,78.3 473.6,78.3 474.9,78.3 474.9,78.3 476.2,78.3 476.2,78.3 477.5,78.3 477.5,78.3 478.8,78.3 478.8,78.3 480.1,78.3 480.1,78.3 481.4,78.3 481.4,78.3 482.6,78.3 482.6,79.3 483.9,79.3 483.9,78.3 485.2,78.3 485.2,79.2 486.5,79.2 486.5,78.3 487.8,78.3 487.8,78.3 489.1,78.3 489.1,78.3 490.4,78.3 490.4,79.1 491.6,79.1 491.6,78.3 492.9,78.3 492.9,79.9 494.2,79.9 494.2,79.5 495.5,79.5 495.5,84.5 494.2,84.5 494.2,85.0 492.9,85.0 492.9,85.0 491.6,85.0 491.6,85.0 490.4,85.0 490.4,85.0 489.1,85.0 489.1,85.0 487.8,85.0 487.8,85.0 486.5,85.0 486.5,85.0 485.2,85.0 485.2,85.0 483.9,85.0 483.9,85.0 482.6,85.0 482.6,86.2 481.4,86.2 481.4,85.0 480.1,85.0 480.1,85.0 478.8,85.0 478.8,85.0 477.5,85.0 477.5,85.0 476.2,85.0 476.2,85.7 474.9,85.7 474.9,85.0 473.6,85.0 473.6,85.0 472.3,85.0 472.3,87.3 471.1,87.3 471.1,85.0 469.8,85.0 469.8,85.0 468.5,85.0 468.5,85.0 467.2,85.0 467.2,85.0 465.9,85.0 465.9,85.0 464.6,85.0 464.6,85.0 463.3,85.0 463.3,85.0 462.1,85.0 462.1,85.0 460.8,85.0 460.8,85.0 459.5,85.0 459.5,85.0 458.2,85.0 458.2,86.9 456.9,86.9 456.9,86.1 455.6,86.1 455.6,85.0 454.3,85.0 454.3,85.0 453.1,85.0 453.1,85.0 451.8,85.0 451.8,85.0 450.5,85.0 450.5,85.0 449.2,85.0 449.2,85.0 447.9,85.0 447.9,87.0 446.6,87.0 446.6,85.0 445.3,85.0 445.3,86.2 444.0,86.2 444.0,85.0 442.8,85.0 442.8,85.0 441.5,85.0 441.5,85.0 440.2,85.0 440.2,86.7 438.9,86.7 438.9,85.0 437.6,85.0 437.6,85.0 436.3,85.0 436.3,85.0 435.0,85.0 435.0,85.9 433.8,85.9 433.8,85.0 432.5,85.0 432.5,85.0 431.2,85.0 431.2,85.0 429.9,85.0 429.9,85.0 428.6,85.0 428.6,85.0 427.3,85.0 427.3,85.0 426.0,85.0 426.0,85.0 424.8,85.0 424.8,85.0 423.5,85.0 423.5,86.6 422.2,86.6 422.2,85.0 420.9,85.0 420.9,85.0 419.6,85.0 419.6,85.0 418.3,85.0 418.3,85.0 417.0,85.0 417.0,85.0 415.7,85.0 415.7,85.0 414.5,85.0 414.5,85.0 413.2,85.0 413.2,85.0 411.9,85.0 411.9,86.9 410.6,86.9 410.6,85.0 409.3,85.0 409.3,85.0 408.0,85.0 408.0,85.0 406.7,85.0 406.7,85.0 405.5,85.0 405.5,85.0 404.2,85.0 404.2,85.0 402.9,85.0 402.9,85.0 401.6,85.0 401.6,85.0 400.3,85.0 400.3,85.0 399.0,85.0 399.0,85.0 397.7,85.0 397.7,85.0 396.5,85.0 396.5,85.0 395.2,85.0 395.2,86.4 393.9,86.4 393.9,85.0 392.6,85.0 392.6,86.1 391.3,86.1 391.3,85.0 390.0,85.0 390.0,85.0 388.7,85.0 388.7,85.0 387.4,85.0 387.4,86.9 386.2,86.9 386.2,85.0 384.9,85.0 384.9,85.0 383.6,85.0 383.6,85.0 382.3,85.0 382.3,85.0 381.0,85.0 381.0,85.0 379.7,85.0 379.7,85.0 378.4,85.0 378.4,85.8 377.2,85.8 377.2,85.0 375.9,85.0 375.9,85.0 374.6,85.0 374.6,86.6 373.3,86.6ZM373.3,84.0 414.2,84.0 414.2,239.5 412.9,239.5 412.9,242.9 411.6,242.9 411.6,240.5 410.4,240.5 410.4,240.5 409.1,240.5 409.1,240.5 407.8,240.5 407.8,240.5 406.5,240.5 406.5,240.5 405.3,240.5 405.3,243.9 404.0,243.9 404.0,242.6 402.7,242.6 402.7,240.5 401.4,240.5 401.4,242.3 400.1,242.3 400.1,244.6 398.9,244.6 398.9,242.1 397.6,242.1 397.6,241.4 396.3,241.4 396.3,240.5 395.0,240.5 395.0,243.8 393.8,243.8 393.8,240.5 392.5,240.5 392.5,244.8 391.2,244.8 391.2,240.5 389.9,240.5 389.9,240.5 388.6,240.5 388.6,240.5 387.4,240.5 387.4,240.5 386.1,240.5 386.1,240.5 384.8,240.5 384.8,240.5 383.5,240.5 383.5,241.5 382.2,241.5 382.2,240.5 381.0,240.5 381.0,238.9 379.7,238.9 379.7,240.5 378.4,240.5 378.4,240.5 377.1,240.5 377.1,239.6 375.9,239.6 375.9,238.7 374.6,238.7 374.6,240.5 373.3,240.5ZM440.2,84.0 495.5,84.0 495.5,242.4 494.2,242.4 494.2,237.5 492.9,237.5 492.9,239.0 491.6,239.0 491.6,239.0 490.4,239.0 490.4,239.0 489.1,239.0 489.1,239.0 487.8,239.0 487.8,240.0 486.5,240.0 486.5,239.0 485.2,239.0 485.2,241.0 483.9,241.0 483.9,239.0 482.6,239.0 482.6,239.0 481.4,239.0 481.4,239.0 480.1,239.0 480.1,239.0 478.8,239.0 478.8,239.0 477.5,239.0 477.5,239.0 476.2,239.0 476.2,249.5 474.9,249.5 474.9,238.3 473.6,238.3 473.6,239.0 472.4,239.0 472.4,237.4 471.1,237.4 471.1,241.1 469.8,241.1 469.8,239.0 468.5,239.0 468.5,239.0 467.2,239.0 467.2,239.0 465.9,239.0 465.9,237.6 464.6,237.6 464.6,239.0 463.3,239.0 463.3,242.3 462.1,242.3 462.1,243.6 460.8,243.6 460.8,239.0 459.5,239.0 459.5,243.4 458.2,243.4 458.2,239.0 456.9,239.0 456.9,240.5 455.6,240.5 455.6,237.3 454.3,237.3 454.3,240.8 453.1,240.8 453.1,239.0 451.8,239.0 451.8,239.0 450.5,239.0 450.5,248.9 449.2,248.9 449.2,239.0 447.9,239.0 447.9,239.0 446.6,239.0 446.6,237.4 445.3,237.4 445.3,237.0 444.1,237.0 444.1,240.4 442.8,240.4 442.8,237.9 441.5,237.9 441.5,239.0 440.2,239.0ZM422.6,84.0H426.0V236.0H422.6ZM632.5,78.5 633.8,78.5 633.8,78.5 635.1,78.5 635.1,79.4 636.4,79.4 636.4,78.4 637.6,78.4 637.6,77.4 638.9,77.4 638.9,78.3 640.2,78.3 640.2,78.3 641.5,78.3 641.5,76.5 642.8,76.5 642.8,78.2 644.1,78.2 644.1,78.2 645.3,78.2 645.3,78.2 646.6,78.2 646.6,78.1 647.9,78.1 647.9,78.1 649.2,78.1 649.2,78.1 650.5,78.1 650.5,77.1 651.8,77.1 651.8,78.0 653.0,78.0 653.0,78.0 654.3,78.0 654.3,75.8 655.6,75.8 655.6,78.6 656.9,78.6 656.9,77.9 658.2,77.9 658.2,78.9 659.5,78.9 659.5,77.8 660.7,77.8 660.7,79.0 662.0,79.0 662.0,76.2 663.3,76.2 663.3,77.7 664.6,77.7 664.6,76.4 665.9,76.4 665.9,76.3 667.2,76.3 667.2,77.6 668.5,77.6 668.5,77.6 669.7,77.6 669.7,77.6 671.0,77.6 671.0,77.5 672.3,77.5 672.3,75.1 673.6,75.1 673.6,77.5 674.9,77.5 674.9,75.3 676.2,75.3 676.2,77.4 677.4,77.4 677.4,75.0 678.7,75.0 678.7,77.3 680.0,77.3 680.0,77.3 681.3,77.3 681.3,75.3 682.6,75.3 682.6,76.2 683.9,76.2 683.9,77.2 685.1,77.2 685.1,75.5 686.4,75.5 686.4,78.0 687.7,78.0 687.7,77.1 689.0,77.1 689.0,77.1 690.3,77.1 690.3,77.0 691.6,77.0 691.6,77.0 692.9,77.0 692.9,77.0 694.1,77.0 694.1,77.0 695.4,77.0 695.4,76.9 696.7,76.9 696.7,76.9 698.0,76.9 698.0,74.9 699.3,74.9 699.3,76.8 700.6,76.8 700.6,76.8 701.8,76.8 701.8,76.8 703.1,76.8 703.1,76.7 704.4,76.7 704.4,75.4 705.7,75.4 705.7,76.7 707.0,76.7 707.0,76.6 708.3,76.6 708.3,76.6 709.5,76.6 709.5,74.9 710.8,74.9 710.8,74.9 712.1,74.9 712.1,76.5 713.4,76.5 713.4,74.2 714.7,74.2 714.7,76.4 716.0,76.4 716.0,77.2 717.2,77.2 717.2,76.4 718.5,76.4 718.5,76.3 719.8,76.3 719.8,76.3 721.1,76.3 721.1,75.6 722.4,75.6 722.4,74.2 723.7,74.2 723.7,77.4 725.0,77.4 725.0,77.5 726.2,77.5 726.2,76.2 727.5,76.2 727.5,73.9 728.8,73.9 728.8,76.1 730.1,76.1 730.1,76.1 731.4,76.1 731.4,76.0 732.7,76.0 732.7,76.0 733.9,76.0 733.9,74.7 735.2,74.7 735.2,74.4 736.5,74.4 736.5,75.9 737.8,75.9 737.8,75.9 739.1,75.9 739.1,74.9 740.4,74.9 740.4,75.8 741.6,75.8 741.6,75.8 742.9,75.8 742.9,75.7 744.2,75.7 744.2,75.7 745.5,75.7 745.5,73.6 746.8,73.6 746.8,75.6 748.1,75.6 748.1,75.6 749.3,75.6 749.3,75.6 750.6,75.6 750.6,74.4 751.9,74.4 751.9,77.0 753.2,77.0 753.2,86.7 751.9,86.7 751.9,86.7 750.6,86.7 750.6,87.7 749.3,87.7 749.3,86.7 748.1,86.7 748.1,86.7 746.8,86.7 746.8,88.8 745.5,88.8 745.5,86.7 744.2,86.7 744.2,86.7 742.9,86.7 742.9,86.7 741.6,86.7 741.6,86.7 740.4,86.7 740.4,86.7 739.1,86.7 739.1,86.7 737.8,86.7 737.8,86.7 736.5,86.7 736.5,86.7 735.2,86.7 735.2,86.7 733.9,86.7 733.9,86.7 732.7,86.7 732.7,86.7 731.4,86.7 731.4,86.7 730.1,86.7 730.1,87.6 728.8,87.6 728.8,86.7 727.5,86.7 727.5,86.7 726.2,86.7 726.2,86.7 725.0,86.7 725.0,88.2 723.7,88.2 723.7,86.7 722.4,86.7 722.4,86.7 721.1,86.7 721.1,86.7 719.8,86.7 719.8,86.7 718.5,86.7 718.5,86.7 717.2,86.7 717.2,86.7 716.0,86.7 716.0,87.6 714.7,87.6 714.7,86.7 713.4,86.7 713.4,86.7 712.1,86.7 712.1,86.7 710.8,86.7 710.8,86.7 709.5,86.7 709.5,86.7 708.3,86.7 708.3,86.7 707.0,86.7 707.0,86.7 705.7,86.7 705.7,87.9 704.4,87.9 704.4,86.7 703.1,86.7 703.1,86.7 701.8,86.7 701.8,86.7 700.6,86.7 700.6,86.7 699.3,86.7 699.3,86.7 698.0,86.7 698.0,86.7 696.7,86.7 696.7,87.3 695.4,87.3 695.4,86.7 694.1,86.7 694.1,86.7 692.9,86.7 692.9,86.7 691.6,86.7 691.6,86.7 690.3,86.7 690.3,86.7 689.0,86.7 689.0,86.7 687.7,86.7 687.7,86.7 686.4,86.7 686.4,87.9 685.1,87.9 685.1,86.7 683.9,86.7 683.9,86.7 682.6,86.7 682.6,86.7 681.3,86.7 681.3,86.7 680.0,86.7 680.0,86.7 678.7,86.7 678.7,86.7 677.4,86.7 677.4,86.7 676.2,86.7 676.2,86.7 674.9,86.7 674.9,86.7 673.6,86.7 673.6,86.7 672.3,86.7 672.3,86.7 671.0,86.7 671.0,86.7 669.7,86.7 669.7,86.7 668.5,86.7 668.5,86.7 667.2,86.7 667.2,86.7 665.9,86.7 665.9,86.7 664.6,86.7 664.6,86.7 663.3,86.7 663.3,86.7 662.0,86.7 662.0,86.7 660.7,86.7 660.7,88.4 659.5,88.4 659.5,86.7 658.2,86.7 658.2,86.7 656.9,86.7 656.9,86.7 655.6,86.7 655.6,86.7 654.3,86.7 654.3,86.7 653.0,86.7 653.0,86.7 651.8,86.7 651.8,86.7 650.5,86.7 650.5,86.7 649.2,86.7 649.2,86.7 647.9,86.7 647.9,87.6 646.6,87.6 646.6,86.7 645.3,86.7 645.3,88.2 644.1,88.2 644.1,86.7 642.8,86.7 642.8,86.2 641.5,86.2 641.5,86.7 640.2,86.7 640.2,86.7 638.9,86.7 638.9,86.7 637.6,86.7 637.6,86.7 636.4,86.7 636.4,86.7 635.1,86.7 635.1,87.6 633.8,87.6 633.8,86.7 632.5,86.7ZM632.5,84.0 673.3,84.0 673.3,237.3 672.0,237.3 672.0,239.0 670.8,239.0 670.8,240.5 669.5,240.5 669.5,244.2 668.2,244.2 668.2,239.0 666.9,239.0 666.9,238.2 665.6,238.2 665.6,239.0 664.4,239.0 664.4,244.4 663.1,244.4 663.1,239.0 661.8,239.0 661.8,239.6 660.5,239.6 660.5,239.0 659.3,239.0 659.3,239.0 658.0,239.0 658.0,239.0 656.7,239.0 656.7,239.0 655.4,239.0 655.4,239.0 654.2,239.0 654.2,239.0 652.9,239.0 652.9,239.0 651.6,239.0 651.6,239.0 650.4,239.0 650.4,239.0 649.1,239.0 649.1,239.0 647.8,239.0 647.8,243.4 646.5,243.4 646.5,240.1 645.2,240.1 645.2,237.5 644.0,237.5 644.0,239.0 642.7,239.0 642.7,248.6 641.4,248.6 641.4,239.0 640.1,239.0 640.1,239.0 638.9,239.0 638.9,237.8 637.6,237.8 637.6,239.0 636.3,239.0 636.3,239.0 635.0,239.0 635.0,241.2 633.8,241.2 633.8,239.0 632.5,239.0ZM701.8,84.0 753.2,84.0 753.2,238.5 751.9,238.5 751.9,238.5 750.6,238.5 750.6,238.5 749.3,238.5 749.3,238.5 748.1,238.5 748.1,236.5 746.8,236.5 746.8,238.5 745.5,238.5 745.5,238.5 744.2,238.5 744.2,238.5 742.9,238.5 742.9,237.6 741.6,237.6 741.6,238.5 740.4,238.5 740.4,243.6 739.1,243.6 739.1,242.4 737.8,242.4 737.8,242.7 736.5,242.7 736.5,245.1 735.2,245.1 735.2,239.2 733.9,239.2 733.9,243.3 732.6,243.3 732.6,238.5 731.4,238.5 731.4,238.5 730.1,238.5 730.1,238.5 728.8,238.5 728.8,238.5 727.5,238.5 727.5,238.5 726.2,238.5 726.2,238.5 724.9,238.5 724.9,240.7 723.6,240.7 723.6,242.8 722.4,242.8 722.4,238.5 721.1,238.5 721.1,238.5 719.8,238.5 719.8,238.5 718.5,238.5 718.5,238.5 717.2,238.5 717.2,240.1 715.9,240.1 715.9,240.4 714.6,240.4 714.6,238.5 713.4,238.5 713.4,238.5 712.1,238.5 712.1,238.5 710.8,238.5 710.8,238.5 709.5,238.5 709.5,238.5 708.2,238.5 708.2,238.5 706.9,238.5 706.9,243.5 705.7,243.5 705.7,238.5 704.4,238.5 704.4,238.5 703.1,238.5 703.1,238.5 701.8,238.5ZM682.1,84.0H685.1V247.8H682.1ZM664.5,230.0H665.8V255.0H664.5ZM884.4,79.4H887.1V234.0H884.4ZM889.7,77.5 891.0,77.5 891.0,77.5 892.3,77.5 892.3,76.3 893.6,76.3 893.6,77.5 894.8,77.5 894.8,77.5 896.1,77.5 896.1,77.5 897.4,77.5 897.4,79.1 898.7,79.1 898.7,77.5 900.0,77.5 900.0,77.5 901.3,77.5 901.3,78.3 902.6,78.3 902.6,78.2 903.9,78.2 903.9,76.0 905.1,76.0 905.1,77.5 906.4,77.5 906.4,77.5 907.7,77.5 907.7,77.5 909.0,77.5 909.0,75.7 910.3,75.7 910.3,77.5 911.6,77.5 911.6,77.5 912.9,77.5 912.9,77.5 914.1,77.5 914.1,77.5 915.4,77.5 915.4,77.5 916.7,77.5 916.7,77.5 918.0,77.5 918.0,77.5 919.3,77.5 919.3,77.5 920.6,77.5 920.6,77.5 921.9,77.5 921.9,77.5 923.1,77.5 923.1,77.5 924.4,77.5 924.4,77.5 925.7,77.5 925.7,77.5 927.0,77.5 927.0,77.5 928.3,77.5 928.3,75.1 929.6,75.1 929.6,75.8 930.9,75.8 930.9,77.5 932.1,77.5 932.1,78.7 933.4,78.7 933.4,77.5 934.7,77.5 934.7,78.3 936.0,78.3 936.0,75.4 937.3,75.4 937.3,77.5 938.6,77.5 938.6,77.5 939.9,77.5 939.9,75.7 941.2,75.7 941.2,77.5 942.4,77.5 942.4,77.5 943.7,77.5 943.7,77.5 945.0,77.5 945.0,77.5 946.3,77.5 946.3,77.5 947.6,77.5 947.6,75.6 948.9,75.6 948.9,77.5 950.2,77.5 950.2,77.5 951.4,77.5 951.4,77.5 952.7,77.5 952.7,77.5 954.0,77.5 954.0,78.7 955.3,78.7 955.3,77.5 956.6,77.5 956.6,77.5 957.9,77.5 957.9,77.5 959.2,77.5 959.2,77.5 960.5,77.5 960.5,77.5 961.7,77.5 961.7,77.5 963.0,77.5 963.0,77.5 964.3,77.5 964.3,77.5 965.6,77.5 965.6,77.5 966.9,77.5 966.9,77.5 968.2,77.5 968.2,78.7 969.5,78.7 969.5,79.0 970.7,79.0 970.7,77.5 972.0,77.5 972.0,77.5 973.3,77.5 973.3,77.5 974.6,77.5 974.6,77.5 975.9,77.5 975.9,78.2 977.2,78.2 977.2,77.5 978.5,77.5 978.5,77.5 979.7,77.5 979.7,77.5 981.0,77.5 981.0,77.5 982.3,77.5 982.3,77.5 983.6,77.5 983.6,78.3 984.9,78.3 984.9,77.5 986.2,77.5 986.2,77.5 987.5,77.5 987.5,77.5 988.8,77.5 988.8,77.5 990.0,77.5 990.0,77.5 991.3,77.5 991.3,77.5 992.6,77.5 992.6,76.2 993.9,76.2 993.9,77.5 995.2,77.5 995.2,77.5 996.5,77.5 996.5,76.6 997.8,76.6 997.8,78.2 999.0,78.2 999.0,77.5 1000.3,77.5 1000.3,77.5 1001.6,77.5 1001.6,77.5 1002.9,77.5 1002.9,86.0 1001.6,86.0 1001.6,86.0 1000.3,86.0 1000.3,86.0 999.0,86.0 999.0,86.0 997.8,86.0 997.8,86.0 996.5,86.0 996.5,86.0 995.2,86.0 995.2,86.0 993.9,86.0 993.9,87.9 992.6,87.9 992.6,86.0 991.3,86.0 991.3,86.0 990.0,86.0 990.0,87.9 988.8,87.9 988.8,86.0 987.5,86.0 987.5,86.0 986.2,86.0 986.2,86.8 984.9,86.8 984.9,88.2 983.6,88.2 983.6,87.0 982.3,87.0 982.3,86.0 981.0,86.0 981.0,86.0 979.7,86.0 979.7,86.0 978.5,86.0 978.5,87.9 977.2,87.9 977.2,86.0 975.9,86.0 975.9,86.0 974.6,86.0 974.6,86.0 973.3,86.0 973.3,86.0 972.0,86.0 972.0,86.0 970.7,86.0 970.7,86.0 969.5,86.0 969.5,86.0 968.2,86.0 968.2,86.0 966.9,86.0 966.9,86.0 965.6,86.0 965.6,86.0 964.3,86.0 964.3,86.0 963.0,86.0 963.0,86.0 961.7,86.0 961.7,86.0 960.5,86.0 960.5,87.7 959.2,87.7 959.2,86.0 957.9,86.0 957.9,86.0 956.6,86.0 956.6,86.0 955.3,86.0 955.3,86.0 954.0,86.0 954.0,86.0 952.7,86.0 952.7,88.0 951.4,88.0 951.4,86.0 950.2,86.0 950.2,86.0 948.9,86.0 948.9,86.0 947.6,86.0 947.6,86.0 946.3,86.0 946.3,86.0 945.0,86.0 945.0,86.0 943.7,86.0 943.7,86.0 942.4,86.0 942.4,86.0 941.2,86.0 941.2,86.0 939.9,86.0 939.9,86.0 938.6,86.0 938.6,86.0 937.3,86.0 937.3,86.0 936.0,86.0 936.0,86.0 934.7,86.0 934.7,86.0 933.4,86.0 933.4,86.0 932.1,86.0 932.1,86.0 930.9,86.0 930.9,87.4 929.6,87.4 929.6,86.0 928.3,86.0 928.3,86.0 927.0,86.0 927.0,86.0 925.7,86.0 925.7,86.0 924.4,86.0 924.4,86.0 923.1,86.0 923.1,86.0 921.9,86.0 921.9,87.8 920.6,87.8 920.6,86.0 919.3,86.0 919.3,86.0 918.0,86.0 918.0,86.0 916.7,86.0 916.7,86.0 915.4,86.0 915.4,86.0 914.1,86.0 914.1,86.9 912.9,86.9 912.9,86.0 911.6,86.0 911.6,85.4 910.3,85.4 910.3,86.0 909.0,86.0 909.0,86.0 907.7,86.0 907.7,86.0 906.4,86.0 906.4,86.0 905.1,86.0 905.1,86.0 903.9,86.0 903.9,86.0 902.6,86.0 902.6,86.0 901.3,86.0 901.3,86.0 900.0,86.0 900.0,86.0 898.7,86.0 898.7,86.0 897.4,86.0 897.4,86.0 896.1,86.0 896.1,86.0 894.8,86.0 894.8,86.0 893.6,86.0 893.6,86.0 892.3,86.0 892.3,87.4 891.0,87.4 891.0,86.0 889.7,86.0ZM889.7,84.0 922.6,84.0 922.6,240.6 921.3,240.6 921.3,239.0 920.1,239.0 920.1,239.0 918.8,239.0 918.8,239.0 917.5,239.0 917.5,239.0 916.3,239.0 916.3,237.2 915.0,237.2 915.0,239.0 913.7,239.0 913.7,239.0 912.5,239.0 912.5,239.0 911.2,239.0 911.2,239.0 909.9,239.0 909.9,239.0 908.7,239.0 908.7,243.5 907.4,243.5 907.4,242.4 906.2,242.4 906.2,238.0 904.9,238.0 904.9,239.0 903.6,239.0 903.6,239.0 902.4,239.0 902.4,239.0 901.1,239.0 901.1,239.0 899.8,239.0 899.8,239.0 898.6,239.0 898.6,240.6 897.3,240.6 897.3,239.0 896.0,239.0 896.0,238.0 894.8,238.0 894.8,239.0 893.5,239.0 893.5,243.8 892.2,243.8 892.2,240.9 891.0,240.9 891.0,246.0 889.7,246.0ZM924.0,84.0 932.2,84.0 932.2,239.9 930.8,239.9 930.8,239.0 929.5,239.0 929.5,239.0 928.1,239.0 928.1,239.0 926.7,239.0 926.7,238.3 925.4,238.3 925.4,244.1 924.0,244.1ZM922.4,84.0H924.2V206.0H922.4ZM958.9,84.0 1002.9,84.0 1002.9,243.7 1001.6,243.7 1001.6,242.3 1000.3,242.3 1000.3,238.5 999.0,238.5 999.0,238.5 997.7,238.5 997.7,237.2 996.4,237.2 996.4,238.5 995.1,238.5 995.1,238.5 993.8,238.5 993.8,237.1 992.5,237.1 992.5,238.5 991.3,238.5 991.3,242.7 990.0,242.7 990.0,237.4 988.7,237.4 988.7,243.7 987.4,243.7 987.4,238.5 986.1,238.5 986.1,243.6 984.8,243.6 984.8,238.5 983.5,238.5 983.5,237.7 982.2,237.7 982.2,238.5 980.9,238.5 980.9,237.2 979.6,237.2 979.6,238.5 978.3,238.5 978.3,240.8 977.0,240.8 977.0,238.5 975.7,238.5 975.7,238.5 974.4,238.5 974.4,236.7 973.1,236.7 973.1,238.5 971.8,238.5 971.8,238.5 970.5,238.5 970.5,238.5 969.3,238.5 969.3,238.5 968.0,238.5 968.0,239.3 966.7,239.3 966.7,238.5 965.4,238.5 965.4,238.5 964.1,238.5 964.1,238.5 962.8,238.5 962.8,238.5 961.5,238.5 961.5,242.0 960.2,242.0 960.2,236.7 958.9,236.7ZM942.1,84.0H945.1V235.0H942.1ZM997.2,236.0H998.6V250.5H997.2ZM320.5,214.7H321.9V245.7H320.5ZM347.5,218.0H348.9V233.0H347.5ZM351.7,224.5H353.1V234.0H351.7ZM515.6,211.5H517.0V232.0H515.6ZM520.2,231.0H521.6V242.0H520.2ZM760.3,216.5H761.7V233.0H760.3ZM849.9,224.6H851.3V232.0H849.9ZM185.3,230.0H186.7V250.0H185.3ZM664.3,236.0H665.7V255.0H664.3Z" fill="#f8f700"/><path d="M348.1,324.0H349.4V338.0H348.1ZM323.8,326.0H325.2V332.5H323.8ZM515.9,326.0H517.3V339.7H515.9ZM521.3,326.0H522.7V342.0H521.3ZM596.3,323.0H597.7V329.0H596.3ZM19.6,324.0 20.8,324.0 20.8,324.0 22.1,324.0 22.1,321.7 23.4,321.7 23.4,323.9 24.7,323.9 24.7,322.4 26.0,322.4 26.0,323.9 27.3,323.9 27.3,323.8 28.6,323.8 28.6,323.8 29.9,323.8 29.9,322.7 31.1,322.7 31.1,323.7 32.4,323.7 32.4,321.3 33.7,321.3 33.7,323.7 35.0,323.7 35.0,323.7 36.3,323.7 36.3,323.6 37.6,323.6 37.6,323.6 38.9,323.6 38.9,323.6 40.2,323.6 40.2,323.6 41.4,323.6 41.4,321.8 42.7,321.8 42.7,323.5 44.0,323.5 44.0,323.5 45.3,323.5 45.3,323.4 46.6,323.4 46.6,323.4 47.9,323.4 47.9,323.4 49.2,323.4 49.2,323.4 50.4,323.4 50.4,323.3 51.7,323.3 51.7,330.1 53.0,330.1 53.0,323.3 54.3,323.3 54.3,322.2 55.6,322.2 55.6,323.2 56.9,323.2 56.9,323.2 58.2,323.2 58.2,323.2 59.5,323.2 59.5,323.1 60.7,323.1 60.7,323.1 62.0,323.1 62.0,323.1 63.3,323.1 63.3,323.1 64.6,323.1 64.6,323.0 65.9,323.0 65.9,323.0 67.2,323.0 67.2,323.0 68.5,323.0 68.5,321.0 69.8,321.0 69.8,323.9 71.0,323.9 71.0,322.9 72.3,322.9 72.3,322.9 73.6,322.9 73.6,322.9 74.9,322.9 74.9,322.8 76.2,322.8 76.2,322.8 77.5,322.8 77.5,322.8 78.8,322.8 78.8,322.7 80.1,322.7 80.1,322.7 81.3,322.7 81.3,322.7 82.6,322.7 82.6,322.7 83.9,322.7 83.9,322.6 85.2,322.6 85.2,322.6 86.5,322.6 86.5,322.6 87.8,322.6 87.8,322.6 89.1,322.6 89.1,322.5 90.3,322.5 90.3,322.5 91.6,322.5 91.6,322.5 92.9,322.5 92.9,322.4 94.2,322.4 94.2,322.4 95.5,322.4 95.5,322.4 96.8,322.4 96.8,322.4 98.1,322.4 98.1,322.3 99.4,322.3 99.4,324.0 100.6,324.0 100.6,322.3 101.9,322.3 101.9,322.3 103.2,322.3 103.2,322.2 104.5,322.2 104.5,322.2 105.8,322.2 105.8,322.2 107.1,322.2 107.1,321.0 108.4,321.0 108.4,322.1 109.7,322.1 109.7,322.1 110.9,322.1 110.9,322.1 112.2,322.1 112.2,322.0 113.5,322.0 113.5,322.0 114.8,322.0 114.8,327.8 113.5,327.8 113.5,327.8 112.2,327.8 112.2,327.9 110.9,327.9 110.9,327.9 109.7,327.9 109.7,327.9 108.4,327.9 108.4,328.0 107.1,328.0 107.1,328.0 105.8,328.0 105.8,328.0 104.5,328.0 104.5,328.1 103.2,328.1 103.2,328.1 101.9,328.1 101.9,329.8 100.6,329.8 100.6,328.1 99.4,328.1 99.4,328.2 98.1,328.2 98.1,328.2 96.8,328.2 96.8,328.2 95.5,328.2 95.5,328.3 94.2,328.3 94.2,328.3 92.9,328.3 92.9,328.3 91.6,328.3 91.6,328.4 90.3,328.4 90.3,328.4 89.1,328.4 89.1,330.4 87.8,330.4 87.8,328.4 86.5,328.4 86.5,328.5 85.2,328.5 85.2,328.5 83.9,328.5 83.9,328.5 82.6,328.5 82.6,328.6 81.3,328.6 81.3,328.6 80.1,328.6 80.1,328.6 78.8,328.6 78.8,328.6 77.5,328.6 77.5,329.9 76.2,329.9 76.2,328.7 74.9,328.7 74.9,328.7 73.6,328.7 73.6,328.8 72.3,328.8 72.3,330.8 71.0,330.8 71.0,330.4 69.8,330.4 69.8,328.9 68.5,328.9 68.5,328.9 67.2,328.9 67.2,328.9 65.9,328.9 65.9,328.9 64.6,328.9 64.6,329.0 63.3,329.0 63.3,329.0 62.0,329.0 62.0,329.0 60.7,329.0 60.7,329.1 59.5,329.1 59.5,329.1 58.2,329.1 58.2,329.1 56.9,329.1 56.9,328.4 55.6,328.4 55.6,330.9 54.3,330.9 54.3,329.2 53.0,329.2 53.0,328.5 51.7,328.5 51.7,329.3 50.4,329.3 50.4,329.3 49.2,329.3 49.2,329.3 47.9,329.3 47.9,329.4 46.6,329.4 46.6,329.4 45.3,329.4 45.3,329.4 44.0,329.4 44.0,329.4 42.7,329.4 42.7,329.5 41.4,329.5 41.4,329.5 40.2,329.5 40.2,329.5 38.9,329.5 38.9,329.6 37.6,329.6 37.6,329.6 36.3,329.6 36.3,329.6 35.0,329.6 35.0,329.7 33.7,329.7 33.7,329.7 32.4,329.7 32.4,329.7 31.1,329.7 31.1,329.7 29.9,329.7 29.9,329.8 28.6,329.8 28.6,333.3 27.3,333.3 27.3,332.0 26.0,332.0 26.0,329.9 24.7,329.9 24.7,329.9 23.4,329.9 23.4,329.9 22.1,329.9 22.1,330.0 20.8,330.0 20.8,330.0 19.6,330.0ZM237.5,326.4 238.8,326.4 238.8,326.3 240.0,326.3 240.0,326.3 241.3,326.3 241.3,326.3 242.6,326.3 242.6,326.2 243.9,326.2 243.9,326.2 245.1,326.2 245.1,326.2 246.4,326.2 246.4,326.1 247.7,326.1 247.7,326.1 249.0,326.1 249.0,326.1 250.2,326.1 250.2,326.0 251.5,326.0 251.5,326.0 252.8,326.0 252.8,325.9 254.1,325.9 254.1,325.9 255.3,325.9 255.3,325.9 256.6,325.9 256.6,325.8 257.9,325.8 257.9,324.1 259.2,324.1 259.2,325.8 260.4,325.8 260.4,325.7 261.7,325.7 261.7,325.7 263.0,325.7 263.0,325.7 264.3,325.7 264.3,325.6 265.5,325.6 265.5,325.6 266.8,325.6 266.8,323.7 268.1,323.7 268.1,325.5 269.4,325.5 269.4,325.5 270.6,325.5 270.6,325.4 271.9,325.4 271.9,325.4 273.2,325.4 273.2,325.4 274.5,325.4 274.5,325.3 275.7,325.3 275.7,325.3 277.0,325.3 277.0,325.3 278.3,325.3 278.3,325.2 279.6,325.2 279.6,325.2 280.8,325.2 280.8,325.1 282.1,325.1 282.1,325.1 283.4,325.1 283.4,323.3 284.7,323.3 284.7,325.0 285.9,325.0 285.9,325.0 287.2,325.0 287.2,325.0 288.5,325.0 288.5,324.9 289.8,324.9 289.8,324.9 291.0,324.9 291.0,324.9 292.3,324.9 292.3,324.8 293.6,324.8 293.6,324.8 294.9,324.8 294.9,324.7 296.1,324.7 296.1,324.7 297.4,324.7 297.4,324.7 298.7,324.7 298.7,324.6 300.0,324.6 300.0,324.6 301.2,324.6 301.2,324.6 302.5,324.6 302.5,324.5 303.8,324.5 303.8,324.5 305.1,324.5 305.1,324.4 306.3,324.4 306.3,324.4 307.6,324.4 307.6,324.4 308.9,324.4 308.9,329.8 310.2,329.8 310.2,324.3 311.4,324.3 311.4,324.3 312.7,324.3 312.7,325.1 314.0,325.1 314.0,324.2 315.3,324.2 315.3,324.9 316.5,324.9 316.5,324.1 317.8,324.1 317.8,323.3 319.1,323.3 319.1,324.0 320.4,324.0 320.4,324.0 321.6,324.0 321.6,324.0 322.9,324.0 322.9,323.9 324.2,323.9 324.2,322.2 325.5,322.2 325.5,323.9 326.7,323.9 326.7,321.5 328.0,321.5 328.0,323.8 329.3,323.8 329.3,323.8 330.6,323.8 330.6,323.7 331.8,323.7 331.8,323.7 333.1,323.7 333.1,322.6 334.4,322.6 334.4,329.9 335.7,329.9 335.7,323.6 336.9,323.6 336.9,321.2 338.2,321.2 338.2,322.3 339.5,322.3 339.5,323.5 340.8,323.5 340.8,323.4 342.0,323.4 342.0,323.4 343.3,323.4 343.3,323.4 344.6,323.4 344.6,323.3 345.9,323.3 345.9,323.3 347.1,323.3 347.1,323.2 348.4,323.2 348.4,323.2 349.7,323.2 349.7,321.2 351.0,321.2 351.0,323.1 352.2,323.1 352.2,323.1 353.5,323.1 353.5,323.1 354.8,323.1 354.8,323.0 356.1,323.0 356.1,324.0 357.3,324.0 357.3,321.9 358.6,321.9 358.6,322.9 359.9,322.9 359.9,322.9 361.2,322.9 361.2,322.8 362.4,322.8 362.4,322.0 363.7,322.0 363.7,322.8 365.0,322.8 365.0,321.7 366.3,321.7 366.3,322.7 367.5,322.7 367.5,322.7 368.8,322.7 368.8,322.6 370.1,322.6 370.1,323.2 371.4,323.2 371.4,320.1 372.6,320.1 372.6,323.4 373.9,323.4 373.9,325.6 372.6,325.6 372.6,325.7 371.4,325.7 371.4,328.1 370.1,328.1 370.1,325.8 368.8,325.8 368.8,325.8 367.5,325.8 367.5,325.8 366.3,325.8 366.3,325.9 365.0,325.9 365.0,325.9 363.7,325.9 363.7,326.7 362.4,326.7 362.4,327.1 361.2,327.1 361.2,326.9 359.9,326.9 359.9,326.1 358.6,326.1 358.6,326.1 357.3,326.1 357.3,326.2 356.1,326.2 356.1,326.2 354.8,326.2 354.8,326.3 353.5,326.3 353.5,326.3 352.2,326.3 352.2,326.4 351.0,326.4 351.0,326.4 349.7,326.4 349.7,326.5 348.4,326.5 348.4,326.5 347.1,326.5 347.1,327.6 345.9,327.6 345.9,326.6 344.6,326.6 344.6,326.6 343.3,326.6 343.3,326.7 342.0,326.7 342.0,329.1 340.8,329.1 340.8,327.4 339.5,327.4 339.5,326.8 338.2,326.8 338.2,326.9 336.9,326.9 336.9,327.7 335.7,327.7 335.7,326.9 334.4,326.9 334.4,328.8 333.1,328.8 333.1,326.4 331.8,326.4 331.8,327.1 330.6,327.1 330.6,327.1 329.3,327.1 329.3,327.2 328.0,327.2 328.0,327.2 326.7,327.2 326.7,329.6 325.5,329.6 325.5,327.3 324.2,327.3 324.2,327.3 322.9,327.3 322.9,328.2 321.6,328.2 321.6,327.4 320.4,327.4 320.4,327.5 319.1,327.5 319.1,328.3 317.8,328.3 317.8,332.6 316.5,332.6 316.5,327.6 315.3,327.6 315.3,327.6 314.0,327.6 314.0,327.7 312.7,327.7 312.7,327.7 311.4,327.7 311.4,327.8 310.2,327.8 310.2,327.8 308.9,327.8 308.9,327.9 307.6,327.9 307.6,327.9 306.3,327.9 306.3,329.4 305.1,329.4 305.1,328.0 303.8,328.0 303.8,331.9 302.5,331.9 302.5,329.1 301.2,329.1 301.2,328.1 300.0,328.1 300.0,328.2 298.7,328.2 298.7,328.2 297.4,328.2 297.4,329.9 296.1,329.9 296.1,328.3 294.9,328.3 294.9,328.3 293.6,328.3 293.6,330.6 292.3,330.6 292.3,328.4 291.0,328.4 291.0,328.5 289.8,328.5 289.8,328.5 288.5,328.5 288.5,328.6 287.2,328.6 287.2,332.4 285.9,332.4 285.9,328.7 284.7,328.7 284.7,328.7 283.4,328.7 283.4,328.7 282.1,328.7 282.1,328.8 280.8,328.8 280.8,328.8 279.6,328.8 279.6,328.9 278.3,328.9 278.3,328.9 277.0,328.9 277.0,329.0 275.7,329.0 275.7,331.4 274.5,331.4 274.5,329.0 273.2,329.0 273.2,329.1 271.9,329.1 271.9,329.1 270.6,329.1 270.6,329.2 269.4,329.2 269.4,329.2 268.1,329.2 268.1,329.3 266.8,329.3 266.8,329.3 265.5,329.3 265.5,329.4 264.3,329.4 264.3,331.3 263.0,331.3 263.0,332.6 261.7,332.6 261.7,329.5 260.4,329.5 260.4,329.5 259.2,329.5 259.2,329.6 257.9,329.6 257.9,329.6 256.6,329.6 256.6,329.7 255.3,329.7 255.3,329.7 254.1,329.7 254.1,329.8 252.8,329.8 252.8,329.8 251.5,329.8 251.5,331.7 250.2,331.7 250.2,329.9 249.0,329.9 249.0,335.3 247.7,335.3 247.7,330.0 246.4,330.0 246.4,330.7 245.1,330.7 245.1,330.1 243.9,330.1 243.9,330.1 242.6,330.1 242.6,330.1 241.3,330.1 241.3,336.6 240.0,336.6 240.0,330.2 238.8,330.2 238.8,330.3 237.5,330.3ZM495.1,326.1 496.4,326.1 496.4,327.1 497.7,327.1 497.7,325.6 499.0,325.6 499.0,327.0 500.2,327.0 500.2,327.0 501.5,327.0 501.5,326.9 502.8,326.9 502.8,327.5 504.1,327.5 504.1,331.6 505.4,331.6 505.4,326.8 506.7,326.8 506.7,326.7 508.0,326.7 508.0,326.7 509.2,326.7 509.2,327.5 510.5,327.5 510.5,326.6 511.8,326.6 511.8,326.5 513.1,326.5 513.1,327.1 514.4,327.1 514.4,326.4 515.7,326.4 515.7,326.4 516.9,326.4 516.9,326.3 518.2,326.3 518.2,326.2 519.5,326.2 519.5,326.2 520.8,326.2 520.8,326.1 522.1,326.1 522.1,323.7 523.4,323.7 523.4,326.0 524.7,326.0 524.7,326.0 525.9,326.0 525.9,325.9 527.2,325.9 527.2,325.9 528.5,325.9 528.5,325.8 529.8,325.8 529.8,325.8 531.1,325.8 531.1,325.7 532.4,325.7 532.4,325.7 533.7,325.7 533.7,330.0 534.9,330.0 534.9,331.9 536.2,331.9 536.2,325.5 537.5,325.5 537.5,325.5 538.8,325.5 538.8,324.4 540.1,324.4 540.1,325.4 541.4,325.4 541.4,323.7 542.6,323.7 542.6,325.3 543.9,325.3 543.9,325.2 545.2,325.2 545.2,325.2 546.5,325.2 546.5,325.1 547.8,325.1 547.8,325.1 549.1,325.1 549.1,325.0 550.4,325.0 550.4,325.0 551.6,325.0 551.6,322.6 552.9,322.6 552.9,323.7 554.2,323.7 554.2,324.8 555.5,324.8 555.5,324.8 556.8,324.8 556.8,324.7 558.1,324.7 558.1,324.7 559.4,324.7 559.4,323.5 560.6,323.5 560.6,324.6 561.9,324.6 561.9,324.5 563.2,324.5 563.2,324.4 564.5,324.4 564.5,324.4 565.8,324.4 565.8,325.2 567.1,325.2 567.1,324.3 568.3,324.3 568.3,324.2 569.6,324.2 569.6,322.2 570.9,322.2 570.9,324.1 572.2,324.1 572.2,328.9 573.5,328.9 573.5,324.0 574.8,324.0 574.8,324.0 576.1,324.0 576.1,323.9 577.3,323.9 577.3,323.9 578.6,323.9 578.6,323.8 579.9,323.8 579.9,323.8 581.2,323.8 581.2,323.7 582.5,323.7 582.5,323.7 583.8,323.7 583.8,323.6 585.1,323.6 585.1,322.6 586.3,322.6 586.3,323.5 587.6,323.5 587.6,322.1 588.9,322.1 588.9,321.7 590.2,321.7 590.2,323.4 591.5,323.4 591.5,323.3 592.8,323.3 592.8,329.7 594.0,329.7 594.0,324.0 595.3,324.0 595.3,323.2 596.6,323.2 596.6,323.1 597.9,323.1 597.9,323.1 599.2,323.1 599.2,323.0 600.5,323.0 600.5,323.0 601.8,323.0 601.8,322.9 603.0,322.9 603.0,322.9 604.3,322.9 604.3,322.8 605.6,322.8 605.6,321.1 606.9,321.1 606.9,322.7 608.2,322.7 608.2,321.7 609.5,321.7 609.5,321.6 610.8,321.6 610.8,322.5 612.0,322.5 612.0,321.7 613.3,321.7 613.3,322.4 614.6,322.4 614.6,322.4 615.9,322.4 615.9,322.3 617.2,322.3 617.2,322.3 618.5,322.3 618.5,321.5 619.7,321.5 619.7,320.4 621.0,320.4 621.0,322.1 622.3,322.1 622.3,322.1 623.6,322.1 623.6,322.0 624.9,322.0 624.9,322.0 626.2,322.0 626.2,321.0 627.5,321.0 627.5,321.9 628.7,321.9 628.7,321.8 630.0,321.8 630.0,321.8 631.3,321.8 631.3,321.7 632.6,321.7 632.6,325.6 631.3,325.6 631.3,325.7 630.0,325.7 630.0,328.0 628.7,328.0 628.7,325.8 627.5,325.8 627.5,325.8 626.2,325.8 626.2,325.8 624.9,325.8 624.9,325.9 623.6,325.9 623.6,325.9 622.3,325.9 622.3,327.7 621.0,327.7 621.0,326.0 619.7,326.0 619.7,326.1 618.5,326.1 618.5,326.1 617.2,326.1 617.2,326.1 615.9,326.1 615.9,326.2 614.6,326.2 614.6,326.2 613.3,326.2 613.3,326.3 612.0,326.3 612.0,327.1 610.8,327.1 610.8,326.4 609.5,326.4 609.5,327.6 608.2,327.6 608.2,326.5 606.9,326.5 606.9,326.5 605.6,326.5 605.6,326.5 604.3,326.5 604.3,326.6 603.0,326.6 603.0,325.7 601.8,325.7 601.8,326.7 600.5,326.7 600.5,326.7 599.2,326.7 599.2,326.8 597.9,326.8 597.9,326.8 596.6,326.8 596.6,326.9 595.3,326.9 595.3,326.9 594.0,326.9 594.0,326.9 592.8,326.9 592.8,327.0 591.5,327.0 591.5,327.0 590.2,327.0 590.2,327.1 588.9,327.1 588.9,327.1 587.6,327.1 587.6,327.2 586.3,327.2 586.3,327.2 585.1,327.2 585.1,327.2 583.8,327.2 583.8,328.3 582.5,328.3 582.5,327.3 581.2,327.3 581.2,327.4 579.9,327.4 579.9,327.4 578.6,327.4 578.6,327.5 577.3,327.5 577.3,327.5 576.1,327.5 576.1,326.6 574.8,326.6 574.8,327.6 573.5,327.6 573.5,329.0 572.2,329.0 572.2,329.7 570.9,329.7 570.9,330.0 569.6,330.0 569.6,327.8 568.3,327.8 568.3,327.8 567.1,327.8 567.1,330.0 565.8,330.0 565.8,327.9 564.5,327.9 564.5,328.0 563.2,328.0 563.2,328.0 561.9,328.0 561.9,328.0 560.6,328.0 560.6,328.1 559.4,328.1 559.4,328.1 558.1,328.1 558.1,329.3 556.8,329.3 556.8,329.3 555.5,329.3 555.5,328.3 554.2,328.3 554.2,329.2 552.9,329.2 552.9,330.0 551.6,330.0 551.6,329.2 550.4,329.2 550.4,328.4 549.1,328.4 549.1,328.5 547.8,328.5 547.8,328.5 546.5,328.5 546.5,328.6 545.2,328.6 545.2,328.6 543.9,328.6 543.9,328.7 542.6,328.7 542.6,330.2 541.4,330.2 541.4,328.7 540.1,328.7 540.1,328.8 538.8,328.8 538.8,328.8 537.5,328.8 537.5,328.9 536.2,328.9 536.2,328.9 534.9,328.9 534.9,329.0 533.7,329.0 533.7,329.0 532.4,329.0 532.4,329.0 531.1,329.0 531.1,329.1 529.8,329.1 529.8,329.1 528.5,329.1 528.5,329.9 527.2,329.9 527.2,329.2 525.9,329.2 525.9,329.3 524.7,329.3 524.7,330.9 523.4,330.9 523.4,329.4 522.1,329.4 522.1,329.4 520.8,329.4 520.8,328.6 519.5,328.6 519.5,329.5 518.2,329.5 518.2,329.5 516.9,329.5 516.9,329.6 515.7,329.6 515.7,329.6 514.4,329.6 514.4,329.7 513.1,329.7 513.1,329.7 511.8,329.7 511.8,329.8 510.5,329.8 510.5,329.8 509.2,329.8 509.2,329.8 508.0,329.8 508.0,329.9 506.7,329.9 506.7,329.9 505.4,329.9 505.4,329.1 504.1,329.1 504.1,330.0 502.8,330.0 502.8,330.1 501.5,330.1 501.5,331.9 500.2,331.9 500.2,331.1 499.0,331.1 499.0,332.1 497.7,332.1 497.7,330.2 496.4,330.2 496.4,330.3 495.1,330.3ZM752.8,324.8 754.1,324.8 754.1,326.3 755.4,326.3 755.4,326.3 756.6,326.3 756.6,326.3 757.9,326.3 757.9,326.2 759.2,326.2 759.2,326.2 760.5,326.2 760.5,326.2 761.8,326.2 761.8,326.1 763.1,326.1 763.1,326.1 764.3,326.1 764.3,326.9 765.6,326.9 765.6,326.0 766.9,326.0 766.9,326.0 768.2,326.0 768.2,325.9 769.5,325.9 769.5,326.9 770.8,326.9 770.8,325.9 772.0,325.9 772.0,325.8 773.3,325.8 773.3,330.7 774.6,330.7 774.6,325.7 775.9,325.7 775.9,325.7 777.2,325.7 777.2,325.7 778.5,325.7 778.5,326.5 779.7,326.5 779.7,325.6 781.0,325.6 781.0,325.5 782.3,325.5 782.3,325.5 783.6,325.5 783.6,325.5 784.9,325.5 784.9,324.2 786.1,324.2 786.1,325.4 787.4,325.4 787.4,325.4 788.7,325.4 788.7,326.2 790.0,326.2 790.0,325.3 791.3,325.3 791.3,325.2 792.6,325.2 792.6,325.2 793.8,325.2 793.8,325.2 795.1,325.2 795.1,325.1 796.4,325.1 796.4,325.1 797.7,325.1 797.7,324.3 799.0,324.3 799.0,325.0 800.3,325.0 800.3,325.0 801.5,325.0 801.5,324.9 802.8,324.9 802.8,324.9 804.1,324.9 804.1,324.9 805.4,324.9 805.4,324.8 806.7,324.8 806.7,324.8 807.9,324.8 807.9,324.8 809.2,324.8 809.2,324.7 810.5,324.7 810.5,324.7 811.8,324.7 811.8,324.6 813.1,324.6 813.1,324.6 814.4,324.6 814.4,324.6 815.6,324.6 815.6,324.5 816.9,324.5 816.9,325.2 818.2,325.2 818.2,324.4 819.5,324.4 819.5,324.4 820.8,324.4 820.8,324.4 822.1,324.4 822.1,324.3 823.3,324.3 823.3,325.2 824.6,325.2 824.6,322.0 825.9,322.0 825.9,324.2 827.2,324.2 827.2,324.2 828.5,324.2 828.5,324.1 829.8,324.1 829.8,324.1 831.0,324.1 831.0,324.1 832.3,324.1 832.3,324.8 833.6,324.8 833.6,324.0 834.9,324.0 834.9,324.0 836.2,324.0 836.2,323.9 837.4,323.9 837.4,323.9 838.7,323.9 838.7,321.5 840.0,321.5 840.0,322.6 841.3,322.6 841.3,323.8 842.6,323.8 842.6,323.7 843.9,323.7 843.9,323.7 845.1,323.7 845.1,323.7 846.4,323.7 846.4,323.6 847.7,323.6 847.7,323.6 849.0,323.6 849.0,323.5 850.3,323.5 850.3,323.5 851.6,323.5 851.6,323.5 852.8,323.5 852.8,323.4 854.1,323.4 854.1,323.4 855.4,323.4 855.4,327.0 856.7,327.0 856.7,321.2 858.0,321.2 858.0,323.3 859.2,323.3 859.2,323.2 860.5,323.2 860.5,323.2 861.8,323.2 861.8,323.2 863.1,323.2 863.1,323.1 864.4,323.1 864.4,323.1 865.7,323.1 865.7,323.0 866.9,323.0 866.9,323.0 868.2,323.0 868.2,320.7 869.5,320.7 869.5,322.9 870.8,322.9 870.8,322.2 872.1,322.2 872.1,320.9 873.4,320.9 873.4,321.9 874.6,321.9 874.6,322.8 875.9,322.8 875.9,322.7 877.2,322.7 877.2,322.7 878.5,322.7 878.5,322.7 879.8,322.7 879.8,322.6 881.1,322.6 881.1,322.6 882.3,322.6 882.3,323.2 883.6,323.2 883.6,322.5 884.9,322.5 884.9,325.6 883.6,325.6 883.6,325.7 882.3,325.7 882.3,325.7 881.1,325.7 881.1,325.1 879.8,325.1 879.8,325.8 878.5,325.8 878.5,325.1 877.2,325.1 877.2,325.9 875.9,325.9 875.9,325.9 874.6,325.9 874.6,329.0 873.4,329.0 873.4,326.0 872.1,326.0 872.1,326.1 870.8,326.1 870.8,326.1 869.5,326.1 869.5,326.2 868.2,326.2 868.2,325.4 866.9,325.4 866.9,326.3 865.7,326.3 865.7,326.3 864.4,326.3 864.4,326.4 863.1,326.4 863.1,326.4 861.8,326.4 861.8,326.4 860.5,326.4 860.5,326.5 859.2,326.5 859.2,326.5 858.0,326.5 858.0,326.6 856.7,326.6 856.7,326.6 855.4,326.6 855.4,326.7 854.1,326.7 854.1,326.7 852.8,326.7 852.8,326.8 851.6,326.8 851.6,328.5 850.3,328.5 850.3,326.9 849.0,326.9 849.0,326.9 847.7,326.9 847.7,326.9 846.4,326.9 846.4,327.0 845.1,327.0 845.1,327.0 843.9,327.0 843.9,328.6 842.6,328.6 842.6,327.1 841.3,327.1 841.3,327.2 840.0,327.2 840.0,327.2 838.7,327.2 838.7,327.3 837.4,327.3 837.4,327.3 836.2,327.3 836.2,327.4 834.9,327.4 834.9,329.7 833.6,329.7 833.6,327.4 832.3,327.4 832.3,327.5 831.0,327.5 831.0,327.5 829.8,327.5 829.8,327.6 828.5,327.6 828.5,327.6 827.2,327.6 827.2,327.7 825.9,327.7 825.9,327.7 824.6,327.7 824.6,327.8 823.3,327.8 823.3,328.8 822.1,328.8 822.1,328.7 820.8,328.7 820.8,327.9 819.5,327.9 819.5,328.0 818.2,328.0 818.2,327.2 816.9,327.2 816.9,328.0 815.6,328.0 815.6,327.3 814.4,327.3 814.4,328.1 813.1,328.1 813.1,328.2 811.8,328.2 811.8,328.2 810.5,328.2 810.5,328.3 809.2,328.3 809.2,328.3 807.9,328.3 807.9,330.4 806.7,330.4 806.7,328.4 805.4,328.4 805.4,328.5 804.1,328.5 804.1,328.5 802.8,328.5 802.8,328.5 801.5,328.5 801.5,328.6 800.3,328.6 800.3,328.6 799.0,328.6 799.0,328.7 797.7,328.7 797.7,328.7 796.4,328.7 796.4,330.3 795.1,330.3 795.1,328.8 793.8,328.8 793.8,328.9 792.6,328.9 792.6,328.9 791.3,328.9 791.3,329.0 790.0,329.0 790.0,331.1 788.7,331.1 788.7,329.0 787.4,329.0 787.4,329.1 786.1,329.1 786.1,331.2 784.9,331.2 784.9,331.5 783.6,331.5 783.6,329.2 782.3,329.2 782.3,329.3 781.0,329.3 781.0,329.3 779.7,329.3 779.7,329.4 778.5,329.4 778.5,329.4 777.2,329.4 777.2,329.5 775.9,329.5 775.9,329.5 774.6,329.5 774.6,329.5 773.3,329.5 773.3,329.6 772.0,329.6 772.0,329.6 770.8,329.6 770.8,329.7 769.5,329.7 769.5,329.7 768.2,329.7 768.2,329.8 766.9,329.8 766.9,328.9 765.6,328.9 765.6,329.9 764.3,329.9 764.3,336.1 763.1,336.1 763.1,330.9 761.8,330.9 761.8,330.0 760.5,330.0 760.5,330.0 759.2,330.0 759.2,330.1 757.9,330.1 757.9,330.1 756.6,330.1 756.6,330.2 755.4,330.2 755.4,329.5 754.1,329.5 754.1,331.9 752.8,331.9ZM1001.8,327.0 1003.0,327.0 1003.0,327.0 1004.3,327.0 1004.3,331.0 1003.0,331.0 1003.0,331.0 1001.8,331.0ZM114.6,322.8 115.9,322.8 115.9,322.8 117.2,322.8 117.2,321.6 118.5,321.6 118.5,322.8 119.7,322.8 119.7,322.8 121.0,322.8 121.0,322.8 122.3,322.8 122.3,322.8 123.6,322.8 123.6,322.8 124.9,322.8 124.9,322.8 126.2,322.8 126.2,324.1 127.4,324.1 127.4,322.8 128.7,322.8 128.7,322.8 130.0,322.8 130.0,322.8 131.3,322.8 131.3,322.8 132.6,322.8 132.6,321.9 133.9,321.9 133.9,321.3 135.1,321.3 135.1,322.8 136.4,322.8 136.4,323.9 137.7,323.9 137.7,322.8 139.0,322.8 139.0,322.8 140.3,322.8 140.3,322.8 141.6,322.8 141.6,322.8 142.9,322.8 142.9,322.1 144.1,322.1 144.1,322.8 145.4,322.8 145.4,324.1 146.7,324.1 146.7,324.1 148.0,324.1 148.0,323.5 149.3,323.5 149.3,322.8 150.6,322.8 150.6,322.8 151.8,322.8 151.8,322.8 153.1,322.8 153.1,322.8 154.4,322.8 154.4,324.0 155.7,324.0 155.7,485.0 114.6,485.0ZM200.3,322.3 201.6,322.3 201.6,322.3 202.9,322.3 202.9,322.3 204.2,322.3 204.2,322.3 205.5,322.3 205.5,322.3 206.7,322.3 206.7,323.0 208.0,323.0 208.0,321.2 209.3,321.2 209.3,320.7 210.6,320.7 210.6,322.3 211.9,322.3 211.9,322.3 213.2,322.3 213.2,322.3 214.5,322.3 214.5,322.3 215.8,322.3 215.8,323.0 217.1,323.0 217.1,322.3 218.4,322.3 218.4,322.3 219.6,322.3 219.6,322.3 220.9,322.3 220.9,322.3 222.2,322.3 222.2,322.3 223.5,322.3 223.5,322.9 224.8,322.9 224.8,320.3 226.1,320.3 226.1,322.3 227.4,322.3 227.4,323.5 228.7,323.5 228.7,320.9 230.0,320.9 230.0,322.3 231.3,322.3 231.3,320.5 232.5,320.5 232.5,322.3 233.8,322.3 233.8,322.3 235.1,322.3 235.1,323.5 236.4,323.5 236.4,322.3 237.7,322.3 237.7,485.0 200.3,485.0ZM114.6,481.0 115.9,481.0 115.9,479.1 117.2,479.1 117.2,480.1 118.4,480.1 118.4,481.0 119.7,481.0 119.7,481.0 121.0,481.0 121.0,479.4 122.3,479.4 122.3,481.0 123.6,481.0 123.6,481.0 124.9,481.0 124.9,481.0 126.1,481.0 126.1,481.0 127.4,481.0 127.4,481.0 128.7,481.0 128.7,481.0 130.0,481.0 130.0,481.0 131.3,481.0 131.3,481.0 132.6,481.0 132.6,481.0 133.8,481.0 133.8,479.6 135.1,479.6 135.1,481.0 136.4,481.0 136.4,481.0 137.7,481.0 137.7,479.7 139.0,479.7 139.0,481.0 140.2,481.0 140.2,481.0 141.5,481.0 141.5,481.0 142.8,481.0 142.8,481.0 144.1,481.0 144.1,481.0 145.4,481.0 145.4,481.0 146.7,481.0 146.7,481.0 147.9,481.0 147.9,481.0 149.2,481.0 149.2,481.0 150.5,481.0 150.5,481.0 151.8,481.0 151.8,481.0 153.1,481.0 153.1,481.0 154.4,481.0 154.4,481.0 155.6,481.0 155.6,481.0 156.9,481.0 156.9,481.0 158.2,481.0 158.2,481.0 159.5,481.0 159.5,479.4 160.8,479.4 160.8,481.0 162.0,481.0 162.0,481.6 163.3,481.6 163.3,479.6 164.6,479.6 164.6,481.0 165.9,481.0 165.9,481.0 167.2,481.0 167.2,481.0 168.5,481.0 168.5,481.0 169.7,481.0 169.7,481.0 171.0,481.0 171.0,481.0 172.3,481.0 172.3,481.0 173.6,481.0 173.6,481.0 174.9,481.0 174.9,480.3 176.1,480.3 176.1,481.0 177.4,481.0 177.4,481.0 178.7,481.0 178.7,481.0 180.0,481.0 180.0,481.0 181.3,481.0 181.3,481.0 182.6,481.0 182.6,481.0 183.8,481.0 183.8,481.6 185.1,481.6 185.1,481.0 186.4,481.0 186.4,480.3 187.7,480.3 187.7,481.0 189.0,481.0 189.0,481.0 190.3,481.0 190.3,481.0 191.5,481.0 191.5,481.0 192.8,481.0 192.8,481.0 194.1,481.0 194.1,481.0 195.4,481.0 195.4,481.0 196.7,481.0 196.7,481.0 197.9,481.0 197.9,481.0 199.2,481.0 199.2,481.0 200.5,481.0 200.5,481.0 201.8,481.0 201.8,481.0 203.1,481.0 203.1,481.0 204.4,481.0 204.4,481.0 205.6,481.0 205.6,481.0 206.9,481.0 206.9,481.0 208.2,481.0 208.2,481.0 209.5,481.0 209.5,481.0 210.8,481.0 210.8,481.0 212.1,481.0 212.1,481.0 213.3,481.0 213.3,481.0 214.6,481.0 214.6,481.0 215.9,481.0 215.9,481.0 217.2,481.0 217.2,481.0 218.5,481.0 218.5,481.0 219.7,481.0 219.7,481.0 221.0,481.0 221.0,481.0 222.3,481.0 222.3,481.0 223.6,481.0 223.6,481.0 224.9,481.0 224.9,481.0 226.2,481.0 226.2,481.0 227.4,481.0 227.4,481.0 228.7,481.0 228.7,481.0 230.0,481.0 230.0,481.0 231.3,481.0 231.3,481.0 232.6,481.0 232.6,481.0 233.9,481.0 233.9,481.0 235.1,481.0 235.1,481.0 236.4,481.0 236.4,481.0 237.7,481.0 237.7,489.5 236.4,489.5 236.4,489.5 235.1,489.5 235.1,489.5 233.9,489.5 233.9,489.5 232.6,489.5 232.6,489.5 231.3,489.5 231.3,489.5 230.0,489.5 230.0,489.5 228.7,489.5 228.7,489.5 227.4,489.5 227.4,489.5 226.2,489.5 226.2,491.2 224.9,491.2 224.9,489.5 223.6,489.5 223.6,489.5 222.3,489.5 222.3,490.8 221.0,490.8 221.0,489.5 219.7,489.5 219.7,489.5 218.5,489.5 218.5,489.5 217.2,489.5 217.2,489.5 215.9,489.5 215.9,491.6 214.6,491.6 214.6,491.6 213.3,491.6 213.3,489.5 212.1,489.5 212.1,489.5 210.8,489.5 210.8,492.4 209.5,492.4 209.5,489.5 208.2,489.5 208.2,489.5 206.9,489.5 206.9,492.0 205.6,492.0 205.6,489.5 204.4,489.5 204.4,489.5 203.1,489.5 203.1,489.5 201.8,489.5 201.8,489.5 200.5,489.5 200.5,489.5 199.2,489.5 199.2,490.9 197.9,490.9 197.9,491.7 196.7,491.7 196.7,492.4 195.4,492.4 195.4,489.5 194.1,489.5 194.1,489.5 192.8,489.5 192.8,492.2 191.5,492.2 191.5,489.5 190.3,489.5 190.3,489.5 189.0,489.5 189.0,489.5 187.7,489.5 187.7,489.5 186.4,489.5 186.4,489.5 185.1,489.5 185.1,489.5 183.8,489.5 183.8,488.9 182.6,488.9 182.6,491.2 181.3,491.2 181.3,489.5 180.0,489.5 180.0,490.7 178.7,490.7 178.7,489.5 177.4,489.5 177.4,489.5 176.1,489.5 176.1,489.5 174.9,489.5 174.9,489.5 173.6,489.5 173.6,489.5 172.3,489.5 172.3,492.0 171.0,492.0 171.0,488.6 169.7,488.6 169.7,489.5 168.5,489.5 168.5,489.5 167.2,489.5 167.2,492.5 165.9,492.5 165.9,489.5 164.6,489.5 164.6,490.8 163.3,490.8 163.3,489.5 162.0,489.5 162.0,489.5 160.8,489.5 160.8,490.2 159.5,490.2 159.5,491.5 158.2,491.5 158.2,492.2 156.9,492.2 156.9,489.5 155.6,489.5 155.6,490.1 154.4,490.1 154.4,489.5 153.1,489.5 153.1,489.5 151.8,489.5 151.8,493.2 150.5,493.2 150.5,490.1 149.2,490.1 149.2,489.5 147.9,489.5 147.9,492.3 146.7,492.3 146.7,489.5 145.4,489.5 145.4,489.5 144.1,489.5 144.1,489.5 142.8,489.5 142.8,489.5 141.5,489.5 141.5,490.8 140.2,490.8 140.2,489.5 139.0,489.5 139.0,489.5 137.7,489.5 137.7,489.5 136.4,489.5 136.4,489.5 135.1,489.5 135.1,491.3 133.8,491.3 133.8,489.5 132.6,489.5 132.6,489.5 131.3,489.5 131.3,489.5 130.0,489.5 130.0,489.5 128.7,489.5 128.7,489.5 127.4,489.5 127.4,489.5 126.1,489.5 126.1,488.8 124.9,488.8 124.9,489.5 123.6,489.5 123.6,489.5 122.3,489.5 122.3,492.0 121.0,492.0 121.0,489.5 119.7,489.5 119.7,491.0 118.4,491.0 118.4,489.5 117.2,489.5 117.2,489.5 115.9,489.5 115.9,489.5 114.6,489.5ZM163.3,325.0H165.3V483.0H163.3ZM182.8,324.0H185.3V483.0H182.8ZM200.5,312.0H202.0V330.0H200.5ZM186.4,475.0H188.6V483.0H186.4ZM373.7,320.8 375.0,320.8 375.0,322.8 376.3,322.8 376.3,322.8 377.6,322.8 377.6,322.8 378.9,322.8 378.9,322.8 380.2,322.8 380.2,322.8 381.5,322.8 381.5,324.2 382.8,324.2 382.8,322.8 384.0,322.8 384.0,321.7 385.3,321.7 385.3,322.1 386.6,322.1 386.6,322.8 387.9,322.8 387.9,321.9 389.2,321.9 389.2,322.8 390.5,322.8 390.5,322.8 391.8,322.8 391.8,322.8 393.1,322.8 393.1,322.8 394.4,322.8 394.4,322.8 395.7,322.8 395.7,322.8 397.0,322.8 397.0,322.8 398.3,322.8 398.3,322.8 399.6,322.8 399.6,322.8 400.9,322.8 400.9,322.8 402.2,322.8 402.2,322.8 403.5,322.8 403.5,322.8 404.7,322.8 404.7,323.5 406.0,323.5 406.0,322.8 407.3,322.8 407.3,322.8 408.6,322.8 408.6,322.8 409.9,322.8 409.9,322.8 411.2,322.8 411.2,321.1 412.5,321.1 412.5,322.8 413.8,322.8 413.8,485.0 373.7,485.0ZM441.5,324.0 442.8,324.0 442.8,324.0 444.1,324.0 444.1,325.5 445.3,325.5 445.3,324.0 446.6,324.0 446.6,324.0 447.9,324.0 447.9,324.0 449.2,324.0 449.2,325.2 450.5,325.2 450.5,324.0 451.7,324.0 451.7,324.8 453.0,324.8 453.0,324.0 454.3,324.0 454.3,324.0 455.6,324.0 455.6,324.0 456.9,324.0 456.9,324.0 458.2,324.0 458.2,322.2 459.4,322.2 459.4,324.0 460.7,324.0 460.7,324.0 462.0,324.0 462.0,324.0 463.3,324.0 463.3,324.9 464.6,324.9 464.6,324.0 465.8,324.0 465.8,324.0 467.1,324.0 467.1,324.0 468.4,324.0 468.4,324.0 469.7,324.0 469.7,325.4 471.0,325.4 471.0,324.0 472.2,324.0 472.2,324.0 473.5,324.0 473.5,324.0 474.8,324.0 474.8,325.3 476.1,325.3 476.1,324.0 477.4,324.0 477.4,324.0 478.6,324.0 478.6,323.0 479.9,323.0 479.9,324.0 481.2,324.0 481.2,324.0 482.5,324.0 482.5,324.0 483.8,324.0 483.8,324.0 485.1,324.0 485.1,325.0 486.3,325.0 486.3,322.1 487.6,322.1 487.6,324.0 488.9,324.0 488.9,324.0 490.2,324.0 490.2,324.0 491.5,324.0 491.5,324.0 492.7,324.0 492.7,324.0 494.0,324.0 494.0,322.2 495.3,322.2 495.3,485.0 441.5,485.0ZM373.7,481.0 375.0,481.0 375.0,481.0 376.3,481.0 376.3,481.0 377.5,481.0 377.5,481.0 378.8,481.0 378.8,481.0 380.1,481.0 380.1,481.0 381.4,481.0 381.4,481.0 382.7,481.0 382.7,481.0 383.9,481.0 383.9,481.0 385.2,481.0 385.2,481.6 386.5,481.6 386.5,481.0 387.8,481.0 387.8,481.0 389.1,481.0 389.1,481.0 390.3,481.0 390.3,481.0 391.6,481.0 391.6,481.0 392.9,481.0 392.9,481.0 394.2,481.0 394.2,481.0 395.5,481.0 395.5,481.0 396.7,481.0 396.7,481.0 398.0,481.0 398.0,481.0 399.3,481.0 399.3,481.0 400.6,481.0 400.6,481.0 401.9,481.0 401.9,481.0 403.1,481.0 403.1,481.0 404.4,481.0 404.4,479.1 405.7,479.1 405.7,481.0 407.0,481.0 407.0,479.3 408.3,479.3 408.3,481.0 409.5,481.0 409.5,481.0 410.8,481.0 410.8,481.0 412.1,481.0 412.1,481.0 413.4,481.0 413.4,481.0 414.7,481.0 414.7,481.0 415.9,481.0 415.9,481.0 417.2,481.0 417.2,481.0 418.5,481.0 418.5,481.0 419.8,481.0 419.8,481.0 421.1,481.0 421.1,481.0 422.3,481.0 422.3,479.5 423.6,479.5 423.6,481.0 424.9,481.0 424.9,481.0 426.2,481.0 426.2,481.0 427.5,481.0 427.5,481.0 428.7,481.0 428.7,481.5 430.0,481.5 430.0,481.0 431.3,481.0 431.3,480.1 432.6,480.1 432.6,480.0 433.9,480.0 433.9,479.7 435.1,479.7 435.1,481.0 436.4,481.0 436.4,481.0 437.7,481.0 437.7,481.0 439.0,481.0 439.0,481.0 440.3,481.0 440.3,481.0 441.5,481.0 441.5,481.0 442.8,481.0 442.8,481.6 444.1,481.6 444.1,479.9 445.4,479.9 445.4,481.5 446.7,481.5 446.7,481.0 447.9,481.0 447.9,481.0 449.2,481.0 449.2,481.0 450.5,481.0 450.5,479.3 451.8,479.3 451.8,481.0 453.1,481.0 453.1,481.0 454.3,481.0 454.3,481.0 455.6,481.0 455.6,481.0 456.9,481.0 456.9,479.1 458.2,479.1 458.2,481.0 459.5,481.0 459.5,481.0 460.7,481.0 460.7,481.0 462.0,481.0 462.0,481.0 463.3,481.0 463.3,481.0 464.6,481.0 464.6,481.0 465.9,481.0 465.9,481.0 467.1,481.0 467.1,481.0 468.4,481.0 468.4,481.0 469.7,481.0 469.7,481.0 471.0,481.0 471.0,481.0 472.3,481.0 472.3,481.0 473.5,481.0 473.5,481.0 474.8,481.0 474.8,481.0 476.1,481.0 476.1,481.0 477.4,481.0 477.4,481.0 478.7,481.0 478.7,481.0 479.9,481.0 479.9,479.9 481.2,479.9 481.2,481.0 482.5,481.0 482.5,481.0 483.8,481.0 483.8,479.5 485.1,479.5 485.1,481.0 486.3,481.0 486.3,481.0 487.6,481.0 487.6,481.0 488.9,481.0 488.9,481.0 490.2,481.0 490.2,481.0 491.5,481.0 491.5,481.0 492.7,481.0 492.7,481.0 494.0,481.0 494.0,481.0 495.3,481.0 495.3,490.0 494.0,490.0 494.0,490.0 492.7,490.0 492.7,490.0 491.5,490.0 491.5,490.0 490.2,490.0 490.2,490.0 488.9,490.0 488.9,490.0 487.6,490.0 487.6,490.0 486.3,490.0 486.3,492.6 485.1,492.6 485.1,490.0 483.8,490.0 483.8,492.9 482.5,492.9 482.5,490.0 481.2,490.0 481.2,492.3 479.9,492.3 479.9,491.2 478.7,491.2 478.7,495.9 477.4,495.9 477.4,495.5 476.1,495.5 476.1,495.5 474.8,495.5 474.8,490.0 473.5,490.0 473.5,490.0 472.3,490.0 472.3,492.3 471.0,492.3 471.0,490.0 469.7,490.0 469.7,492.0 468.4,492.0 468.4,490.0 467.1,490.0 467.1,490.0 465.9,490.0 465.9,491.5 464.6,491.5 464.6,490.0 463.3,490.0 463.3,490.0 462.0,490.0 462.0,490.0 460.7,490.0 460.7,492.4 459.5,492.4 459.5,490.0 458.2,490.0 458.2,490.0 456.9,490.0 456.9,492.9 455.6,492.9 455.6,490.0 454.3,490.0 454.3,490.0 453.1,490.0 453.1,490.0 451.8,490.0 451.8,490.0 450.5,490.0 450.5,492.9 449.2,492.9 449.2,490.0 447.9,490.0 447.9,490.0 446.7,490.0 446.7,492.2 445.4,492.2 445.4,490.0 444.1,490.0 444.1,492.1 442.8,492.1 442.8,489.1 441.5,489.1 441.5,490.0 440.3,490.0 440.3,493.0 439.0,493.0 439.0,492.6 437.7,492.6 437.7,490.0 436.4,490.0 436.4,490.0 435.1,490.0 435.1,490.0 433.9,490.0 433.9,490.0 432.6,490.0 432.6,490.0 431.3,490.0 431.3,490.9 430.0,490.9 430.0,490.0 428.7,490.0 428.7,492.1 427.5,492.1 427.5,490.0 426.2,490.0 426.2,490.0 424.9,490.0 424.9,491.8 423.6,491.8 423.6,490.0 422.3,490.0 422.3,490.8 421.1,490.8 421.1,490.0 419.8,490.0 419.8,490.0 418.5,490.0 418.5,489.1 417.2,489.1 417.2,491.2 415.9,491.2 415.9,490.0 414.7,490.0 414.7,491.8 413.4,491.8 413.4,490.8 412.1,490.8 412.1,494.7 410.8,494.7 410.8,496.1 409.5,496.1 409.5,489.0 408.3,489.0 408.3,492.0 407.0,492.0 407.0,489.2 405.7,489.2 405.7,490.0 404.4,490.0 404.4,490.0 403.1,490.0 403.1,490.0 401.9,490.0 401.9,491.0 400.6,491.0 400.6,491.7 399.3,491.7 399.3,490.0 398.0,490.0 398.0,490.9 396.7,490.9 396.7,490.0 395.5,490.0 395.5,490.0 394.2,490.0 394.2,490.0 392.9,490.0 392.9,490.0 391.6,490.0 391.6,490.0 390.3,490.0 390.3,490.0 389.1,490.0 389.1,490.0 387.8,490.0 387.8,491.5 386.5,491.5 386.5,490.0 385.2,490.0 385.2,490.0 383.9,490.0 383.9,492.4 382.7,492.4 382.7,490.0 381.4,490.0 381.4,490.0 380.1,490.0 380.1,492.2 378.8,492.2 378.8,490.0 377.5,490.0 377.5,490.0 376.3,490.0 376.3,490.0 375.0,490.0 375.0,490.0 373.7,490.0ZM424.2,314.7H426.8V483.0H424.2ZM625.9,325.0H627.9V482.6H625.9ZM632.4,322.8 633.7,322.8 633.7,322.8 634.9,322.8 634.9,322.8 636.2,322.8 636.2,322.8 637.5,322.8 637.5,322.8 638.7,322.8 638.7,322.8 640.0,322.8 640.0,322.8 641.2,322.8 641.2,321.7 642.5,321.7 642.5,322.8 643.8,322.8 643.8,322.8 645.0,322.8 645.0,322.8 646.3,322.8 646.3,322.8 647.6,322.8 647.6,322.8 648.8,322.8 648.8,322.8 650.1,322.8 650.1,322.8 651.4,322.8 651.4,322.8 652.6,322.8 652.6,322.8 653.9,322.8 653.9,322.8 655.2,322.8 655.2,321.2 656.4,321.2 656.4,322.8 657.7,322.8 657.7,324.0 658.9,324.0 658.9,322.8 660.2,322.8 660.2,322.0 661.5,322.0 661.5,322.8 662.7,322.8 662.7,322.8 664.0,322.8 664.0,485.0 632.4,485.0ZM665.6,322.3 666.8,322.3 666.8,322.3 668.0,322.3 668.0,322.3 669.2,322.3 669.2,322.3 670.4,322.3 670.4,322.3 671.6,322.3 671.6,323.8 672.8,323.8 672.8,485.0 665.6,485.0ZM701.5,325.0 702.8,325.0 702.8,324.3 704.1,324.3 704.1,322.9 705.4,322.9 705.4,324.3 706.6,324.3 706.6,324.3 707.9,324.3 707.9,324.3 709.2,324.3 709.2,324.3 710.5,324.3 710.5,324.3 711.8,324.3 711.8,324.3 713.1,324.3 713.1,325.2 714.4,325.2 714.4,324.3 715.7,324.3 715.7,324.3 717.0,324.3 717.0,324.3 718.2,324.3 718.2,324.3 719.5,324.3 719.5,324.3 720.8,324.3 720.8,324.3 722.1,324.3 722.1,324.3 723.4,324.3 723.4,325.2 724.7,325.2 724.7,323.5 726.0,323.5 726.0,323.0 727.2,323.0 727.2,324.3 728.5,324.3 728.5,324.3 729.8,324.3 729.8,324.3 731.1,324.3 731.1,324.3 732.4,324.3 732.4,324.3 733.7,324.3 733.7,324.3 735.0,324.3 735.0,323.1 736.3,323.1 736.3,324.3 737.5,324.3 737.5,324.3 738.8,324.3 738.8,322.8 740.1,322.8 740.1,324.3 741.4,324.3 741.4,324.3 742.7,324.3 742.7,324.3 744.0,324.3 744.0,322.5 745.3,322.5 745.3,324.3 746.6,324.3 746.6,324.3 747.9,324.3 747.9,322.7 749.1,322.7 749.1,324.3 750.4,324.3 750.4,324.3 751.7,324.3 751.7,324.3 753.0,324.3 753.0,485.0 701.5,485.0ZM632.4,479.7 633.7,479.7 633.7,481.5 635.0,481.5 635.0,481.5 636.2,481.5 636.2,481.5 637.5,481.5 637.5,481.5 638.8,481.5 638.8,481.5 640.1,481.5 640.1,481.5 641.4,481.5 641.4,481.5 642.7,481.5 642.7,481.5 643.9,481.5 643.9,481.5 645.2,481.5 645.2,481.5 646.5,481.5 646.5,481.5 647.8,481.5 647.8,481.5 649.1,481.5 649.1,481.5 650.4,481.5 650.4,481.5 651.6,481.5 651.6,481.5 652.9,481.5 652.9,481.5 654.2,481.5 654.2,481.5 655.5,481.5 655.5,481.5 656.8,481.5 656.8,480.3 658.1,480.3 658.1,481.5 659.3,481.5 659.3,481.5 660.6,481.5 660.6,481.5 661.9,481.5 661.9,481.5 663.2,481.5 663.2,481.5 664.5,481.5 664.5,481.5 665.8,481.5 665.8,481.5 667.0,481.5 667.0,481.5 668.3,481.5 668.3,481.5 669.6,481.5 669.6,480.5 670.9,480.5 670.9,481.5 672.2,481.5 672.2,479.8 673.5,479.8 673.5,480.0 674.7,480.0 674.7,481.5 676.0,481.5 676.0,481.5 677.3,481.5 677.3,481.5 678.6,481.5 678.6,481.5 679.9,481.5 679.9,481.5 681.2,481.5 681.2,481.5 682.4,481.5 682.4,481.5 683.7,481.5 683.7,481.5 685.0,481.5 685.0,481.5 686.3,481.5 686.3,481.5 687.6,481.5 687.6,481.5 688.9,481.5 688.9,481.5 690.1,481.5 690.1,481.5 691.4,481.5 691.4,481.5 692.7,481.5 692.7,481.5 694.0,481.5 694.0,481.5 695.3,481.5 695.3,481.5 696.5,481.5 696.5,481.5 697.8,481.5 697.8,481.5 699.1,481.5 699.1,481.5 700.4,481.5 700.4,481.5 701.7,481.5 701.7,480.5 703.0,480.5 703.0,481.5 704.2,481.5 704.2,481.5 705.5,481.5 705.5,481.5 706.8,481.5 706.8,481.5 708.1,481.5 708.1,481.5 709.4,481.5 709.4,481.5 710.7,481.5 710.7,481.5 711.9,481.5 711.9,480.4 713.2,480.4 713.2,481.5 714.5,481.5 714.5,481.5 715.8,481.5 715.8,481.5 717.1,481.5 717.1,481.5 718.4,481.5 718.4,481.5 719.6,481.5 719.6,481.5 720.9,481.5 720.9,481.5 722.2,481.5 722.2,481.5 723.5,481.5 723.5,481.5 724.8,481.5 724.8,481.5 726.1,481.5 726.1,481.5 727.3,481.5 727.3,481.5 728.6,481.5 728.6,481.5 729.9,481.5 729.9,481.5 731.2,481.5 731.2,481.5 732.5,481.5 732.5,479.7 733.8,479.7 733.8,481.5 735.0,481.5 735.0,479.8 736.3,479.8 736.3,481.5 737.6,481.5 737.6,481.5 738.9,481.5 738.9,481.5 740.2,481.5 740.2,481.5 741.5,481.5 741.5,481.5 742.7,481.5 742.7,481.5 744.0,481.5 744.0,481.5 745.3,481.5 745.3,481.5 746.6,481.5 746.6,481.5 747.9,481.5 747.9,481.5 749.2,481.5 749.2,481.5 750.4,481.5 750.4,481.5 751.7,481.5 751.7,481.5 753.0,481.5 753.0,490.0 751.7,490.0 751.7,493.3 750.4,493.3 750.4,489.1 749.2,489.1 749.2,490.0 747.9,490.0 747.9,492.5 746.6,492.5 746.6,490.0 745.3,490.0 745.3,490.0 744.0,490.0 744.0,489.0 742.7,489.0 742.7,490.0 741.5,490.0 741.5,490.0 740.2,490.0 740.2,490.0 738.9,490.0 738.9,490.0 737.6,490.0 737.6,492.3 736.3,492.3 736.3,490.0 735.0,490.0 735.0,490.0 733.8,490.0 733.8,494.0 732.5,494.0 732.5,491.4 731.2,491.4 731.2,490.0 729.9,490.0 729.9,492.9 728.6,492.9 728.6,490.0 727.3,490.0 727.3,490.0 726.1,490.0 726.1,490.0 724.8,490.0 724.8,490.0 723.5,490.0 723.5,491.0 722.2,491.0 722.2,491.7 720.9,491.7 720.9,490.0 719.6,490.0 719.6,489.2 718.4,489.2 718.4,490.0 717.1,490.0 717.1,490.8 715.8,490.8 715.8,490.0 714.5,490.0 714.5,490.0 713.2,490.0 713.2,489.4 711.9,489.4 711.9,490.0 710.7,490.0 710.7,492.5 709.4,492.5 709.4,490.0 708.1,490.0 708.1,489.3 706.8,489.3 706.8,490.0 705.5,490.0 705.5,490.0 704.2,490.0 704.2,491.4 703.0,491.4 703.0,490.0 701.7,490.0 701.7,490.0 700.4,490.0 700.4,490.0 699.1,490.0 699.1,490.0 697.8,490.0 697.8,490.0 696.5,490.0 696.5,489.2 695.3,489.2 695.3,490.0 694.0,490.0 694.0,490.0 692.7,490.0 692.7,490.0 691.4,490.0 691.4,490.0 690.1,490.0 690.1,492.9 688.9,492.9 688.9,490.0 687.6,490.0 687.6,490.0 686.3,490.0 686.3,492.4 685.0,492.4 685.0,490.0 683.7,490.0 683.7,490.0 682.4,490.0 682.4,490.0 681.2,490.0 681.2,490.0 679.9,490.0 679.9,490.0 678.6,490.0 678.6,490.0 677.3,490.0 677.3,490.0 676.0,490.0 676.0,490.0 674.7,490.0 674.7,490.0 673.5,490.0 673.5,491.8 672.2,491.8 672.2,490.0 670.9,490.0 670.9,490.0 669.6,490.0 669.6,490.0 668.3,490.0 668.3,490.0 667.0,490.0 667.0,490.0 665.8,490.0 665.8,491.6 664.5,491.6 664.5,490.0 663.2,490.0 663.2,491.2 661.9,491.2 661.9,490.0 660.6,490.0 660.6,490.0 659.3,490.0 659.3,490.0 658.1,490.0 658.1,490.0 656.8,490.0 656.8,491.3 655.5,491.3 655.5,492.4 654.2,492.4 654.2,490.0 652.9,490.0 652.9,490.0 651.6,490.0 651.6,490.0 650.4,490.0 650.4,490.0 649.1,490.0 649.1,489.3 647.8,489.3 647.8,490.0 646.5,490.0 646.5,492.2 645.2,492.2 645.2,492.2 643.9,492.2 643.9,490.8 642.7,490.8 642.7,491.4 641.4,491.4 641.4,490.0 640.1,490.0 640.1,490.0 638.8,490.0 638.8,490.8 637.5,490.8 637.5,492.5 636.2,492.5 636.2,492.3 635.0,492.3 635.0,490.0 633.7,490.0 633.7,491.9 632.4,491.9ZM682.0,342.0H684.2V483.0H682.0ZM663.0,470.0H666.6V483.0H663.0ZM884.7,326.0H887.0V482.6H884.7ZM890.2,322.3 891.5,322.3 891.5,322.3 892.8,322.3 892.8,322.3 894.0,322.3 894.0,322.3 895.3,322.3 895.3,323.4 896.6,323.4 896.6,322.3 897.9,322.3 897.9,322.3 899.2,322.3 899.2,323.2 900.4,323.2 900.4,322.3 901.7,322.3 901.7,321.1 903.0,321.1 903.0,322.3 904.3,322.3 904.3,322.3 905.6,322.3 905.6,323.6 906.8,323.6 906.8,320.5 908.1,320.5 908.1,321.5 909.4,321.5 909.4,322.3 910.7,322.3 910.7,322.3 912.0,322.3 912.0,322.3 913.2,322.3 913.2,322.3 914.5,322.3 914.5,322.3 915.8,322.3 915.8,322.3 917.1,322.3 917.1,322.3 918.4,322.3 918.4,322.3 919.6,322.3 919.6,322.3 920.9,322.3 920.9,322.3 922.2,322.3 922.2,485.0 890.2,485.0ZM924.0,320.5 925.3,320.5 925.3,320.5 926.7,320.5 926.7,319.4 928.0,319.4 928.0,320.5 929.3,320.5 929.3,321.5 930.7,321.5 930.7,320.5 932.0,320.5 932.0,485.0 924.0,485.0ZM961.3,321.4 962.6,321.4 962.6,323.3 963.8,323.3 963.8,321.3 965.1,321.3 965.1,323.3 966.4,323.3 966.4,324.0 967.7,324.0 967.7,323.3 968.9,323.3 968.9,322.4 970.2,322.4 970.2,323.3 971.5,323.3 971.5,323.3 972.7,323.3 972.7,323.3 974.0,323.3 974.0,323.3 975.3,323.3 975.3,323.3 976.6,323.3 976.6,323.3 977.8,323.3 977.8,323.3 979.1,323.3 979.1,323.3 980.4,323.3 980.4,323.3 981.6,323.3 981.6,323.3 982.9,323.3 982.9,323.3 984.2,323.3 984.2,323.3 985.5,323.3 985.5,323.3 986.7,323.3 986.7,321.3 988.0,321.3 988.0,323.3 989.3,323.3 989.3,321.2 990.6,321.2 990.6,323.3 991.8,323.3 991.8,321.6 993.1,321.6 993.1,324.4 994.4,324.4 994.4,323.3 995.6,323.3 995.6,323.3 996.9,323.3 996.9,323.3 998.2,323.3 998.2,323.3 999.5,323.3 999.5,324.5 1000.7,324.5 1000.7,323.3 1002.0,323.3 1002.0,485.0 961.3,485.0ZM890.2,482.0 891.5,482.0 891.5,482.0 892.8,482.0 892.8,482.0 894.1,482.0 894.1,481.0 895.3,481.0 895.3,482.6 896.6,482.6 896.6,482.0 897.9,482.0 897.9,482.0 899.2,482.0 899.2,482.0 900.5,482.0 900.5,480.5 901.8,480.5 901.8,482.0 903.1,482.0 903.1,482.0 904.3,482.0 904.3,482.0 905.6,482.0 905.6,482.0 906.9,482.0 906.9,482.0 908.2,482.0 908.2,482.0 909.5,482.0 909.5,482.0 910.8,482.0 910.8,482.0 912.0,482.0 912.0,482.0 913.3,482.0 913.3,482.0 914.6,482.0 914.6,482.0 915.9,482.0 915.9,482.0 917.2,482.0 917.2,482.0 918.5,482.0 918.5,482.0 919.8,482.0 919.8,482.0 921.0,482.0 921.0,482.5 922.3,482.5 922.3,482.0 923.6,482.0 923.6,482.0 924.9,482.0 924.9,482.0 926.2,482.0 926.2,480.1 927.5,480.1 927.5,482.5 928.8,482.5 928.8,482.0 930.0,482.0 930.0,482.0 931.3,482.0 931.3,482.0 932.6,482.0 932.6,482.0 933.9,482.0 933.9,482.0 935.2,482.0 935.2,480.1 936.5,480.1 936.5,482.0 937.7,482.0 937.7,482.0 939.0,482.0 939.0,482.0 940.3,482.0 940.3,482.0 941.6,482.0 941.6,482.0 942.9,482.0 942.9,482.0 944.2,482.0 944.2,480.7 945.5,480.7 945.5,480.2 946.7,480.2 946.7,482.0 948.0,482.0 948.0,482.0 949.3,482.0 949.3,482.0 950.6,482.0 950.6,482.0 951.9,482.0 951.9,482.0 953.2,482.0 953.2,480.4 954.5,480.4 954.5,482.0 955.7,482.0 955.7,482.0 957.0,482.0 957.0,480.1 958.3,480.1 958.3,482.0 959.6,482.0 959.6,482.0 960.9,482.0 960.9,482.0 962.2,482.0 962.2,482.0 963.4,482.0 963.4,480.1 964.7,480.1 964.7,482.0 966.0,482.0 966.0,481.2 967.3,481.2 967.3,482.0 968.6,482.0 968.6,482.0 969.9,482.0 969.9,482.0 971.2,482.0 971.2,482.0 972.4,482.0 972.4,482.0 973.7,482.0 973.7,482.0 975.0,482.0 975.0,482.0 976.3,482.0 976.3,482.0 977.6,482.0 977.6,482.0 978.9,482.0 978.9,482.0 980.2,482.0 980.2,480.8 981.4,480.8 981.4,480.0 982.7,480.0 982.7,482.5 984.0,482.5 984.0,482.0 985.3,482.0 985.3,482.0 986.6,482.0 986.6,480.4 987.9,480.4 987.9,482.0 989.1,482.0 989.1,482.0 990.4,482.0 990.4,482.0 991.7,482.0 991.7,482.0 993.0,482.0 993.0,482.0 994.3,482.0 994.3,482.0 995.6,482.0 995.6,482.0 996.9,482.0 996.9,482.0 998.1,482.0 998.1,482.0 999.4,482.0 999.4,482.0 1000.7,482.0 1000.7,482.0 1002.0,482.0 1002.0,490.0 1000.7,490.0 1000.7,490.0 999.4,490.0 999.4,490.0 998.1,490.0 998.1,490.0 996.9,490.0 996.9,493.0 995.6,493.0 995.6,490.0 994.3,490.0 994.3,491.9 993.0,491.9 993.0,490.7 991.7,490.7 991.7,490.0 990.4,490.0 990.4,490.0 989.1,490.0 989.1,491.4 987.9,491.4 987.9,491.2 986.6,491.2 986.6,490.0 985.3,490.0 985.3,489.3 984.0,489.3 984.0,489.1 982.7,489.1 982.7,490.0 981.4,490.0 981.4,491.0 980.2,491.0 980.2,490.0 978.9,490.0 978.9,490.0 977.6,490.0 977.6,490.9 976.3,490.9 976.3,490.0 975.0,490.0 975.0,492.9 973.7,492.9 973.7,490.0 972.4,490.0 972.4,490.0 971.2,490.0 971.2,490.0 969.9,490.0 969.9,490.0 968.6,490.0 968.6,491.4 967.3,491.4 967.3,491.1 966.0,491.1 966.0,491.7 964.7,491.7 964.7,490.0 963.4,490.0 963.4,492.0 962.2,492.0 962.2,490.0 960.9,490.0 960.9,491.3 959.6,491.3 959.6,489.4 958.3,489.4 958.3,490.0 957.0,490.0 957.0,490.0 955.7,490.0 955.7,492.1 954.5,492.1 954.5,490.0 953.2,490.0 953.2,492.3 951.9,492.3 951.9,490.0 950.6,490.0 950.6,490.0 949.3,490.0 949.3,491.1 948.0,491.1 948.0,492.8 946.7,492.8 946.7,492.0 945.5,492.0 945.5,490.0 944.2,490.0 944.2,490.0 942.9,490.0 942.9,489.1 941.6,489.1 941.6,490.7 940.3,490.7 940.3,490.0 939.0,490.0 939.0,490.0 937.7,490.0 937.7,490.0 936.5,490.0 936.5,490.0 935.2,490.0 935.2,490.0 933.9,490.0 933.9,490.0 932.6,490.0 932.6,491.2 931.3,491.2 931.3,489.0 930.0,489.0 930.0,491.7 928.8,491.7 928.8,489.1 927.5,489.1 927.5,490.0 926.2,490.0 926.2,490.0 924.9,490.0 924.9,489.1 923.6,489.1 923.6,490.0 922.3,490.0 922.3,490.0 921.0,490.0 921.0,490.0 919.8,490.0 919.8,490.0 918.5,490.0 918.5,490.0 917.2,490.0 917.2,490.0 915.9,490.0 915.9,490.0 914.6,490.0 914.6,490.0 913.3,490.0 913.3,490.0 912.0,490.0 912.0,490.0 910.8,490.0 910.8,490.0 909.5,490.0 909.5,490.0 908.2,490.0 908.2,491.1 906.9,491.1 906.9,490.0 905.6,490.0 905.6,490.0 904.3,490.0 904.3,490.0 903.1,490.0 903.1,490.0 901.8,490.0 901.8,492.3 900.5,492.3 900.5,490.0 899.2,490.0 899.2,490.0 897.9,490.0 897.9,489.0 896.6,489.0 896.6,490.9 895.3,490.9 895.3,490.6 894.1,490.6 894.1,490.0 892.8,490.0 892.8,490.0 891.5,490.0 891.5,490.0 890.2,490.0ZM943.4,324.5H945.6V483.0H943.4ZM921.0,470.0H925.0V483.0H921.0Z" fill="#00f400"/>
<!-- markers -->
<path d="M0 216H9.5L19 225.6L14.3 230.6L19 235.7L9.5 245.5H0Z" fill="#f8f700"/>
<path d="M1.3 221h5.5M4.05 221V229.8M4.05 235.5V240.5M1.3 240.5h5.5" stroke="#111" stroke-width="2.3" fill="none"/>
<path d="M0 479.8H9.8L19 489L9.8 498.7H0Z" fill="#00f400"/>
<text x="0.2" y="495.2" font-size="18" fill="#111" stroke="#111" stroke-width="0.6" textLength="9" lengthAdjust="spacingAndGlyphs">2</text>
<path d="M501.8 40.3H521L520.6 43L518.7 47L515.7 51L511.4 54.3L507.1 51L504.1 47L502.2 43Z" fill="#2aaae6" stroke="#2aaae6" stroke-width="0.6" stroke-linejoin="round"/>
<!-- watermark -->
<text x="20" y="100.2" font-size="13.5" fill="#ece0e4" stroke="#ece0e4" stroke-width="0.25" textLength="39.5" lengthAdjust="spacingAndGlyphs">Bryan1</text>
<text x="19.7" y="119.5" font-size="10.5" fill="#ece0e4" stroke="#ece0e4" stroke-width="0.25" textLength="108.4" lengthAdjust="spacingAndGlyphs">www.thebackshed.com</text>
<text x="19.7" y="134.2" font-size="10.7" fill="#ece0e4" stroke="#ece0e4" stroke-width="0.25" textLength="53.9" lengthAdjust="spacingAndGlyphs">2026-03-30</text>
<!-- top bar -->
<path fill-rule="evenodd" fill="#2a82e6" d="
M21.3 2.4H30.6V14.6H39.4V2.4H48.7V35.2H39.4V23H30.6V35.2H21.3Z
M55.4 8.2H74.4Q77.9 8.2 77.9 11.7V35H55.4Q51.9 35 51.9 31.5V11.7Q51.9 8.2 55.4 8.2Z
M60.2 15.1H68.5V18.4H60.2Z M51.9 16.9H60.2V17.8H51.9Z M60.2 23.9H68.5V28.6H60.2Z
M81.8 8.2H103.7Q107.2 8.2 107.2 11.7V35H99.7V15.7H91.5V35H81.8Z
M110.5 2.6H118.9V8.3H126.4V15.4H118.9V28H127.2V35.2H114Q110.5 35.2 110.5 31.7Z
M134 8.2H153.6Q157.1 8.2 157.1 11.7V21.8Q157.1 25.3 153.6 25.3H139.4V29.4H160.5V2.7H168.1V15.6L174.2 8.5H185.1L177 21.5L185.5 34.8H174.2L168.1 26.2V34.8H134Q130.5 34.8 130.5 31.3V11.7Q130.5 8.2 134 8.2Z
M140.5 14.4H147Q148.2 14.4 148.2 16.45Q148.2 18.5 147 18.5H140.5Q138.7 18.5 138.7 16.45Q138.7 14.4 140.5 14.4Z
"/>
<rect x="210.9" y="6.25" width="87.2" height="29" rx="3" fill="#00f400"/>
<text x="240.3" y="28.9" font-size="24" font-weight="bold" fill="#111" stroke="#111" stroke-width="0.8" textLength="28.5" lengthAdjust="spacingAndGlyphs">TD</text>
<rect x="320" y="6.25" width="25.6" height="29" rx="3" fill="#14cddc"/>
<text x="323.8" y="29.7" font-size="26" font-weight="bold" fill="#111" stroke="#111" stroke-width="0.8" textLength="18.8" lengthAdjust="spacingAndGlyphs">H</text>
<text x="371.9" y="28.6" font-size="21" fill="#fff" stroke="#fff" stroke-width="0.2" textLength="44.5" lengthAdjust="spacing">5ms</text>
<text x="464.3" y="28.6" font-size="21" fill="#fff" stroke="#fff" stroke-width="0.2" textLength="123.5" lengthAdjust="spacing">50.00KSa/s</text>
<text x="619.2" y="27.7" font-size="21" fill="#fff" stroke="#fff" stroke-width="0.2" textLength="50.6" lengthAdjust="spacing">4Kpt</text>
<rect x="710.1" y="5.9" width="25.8" height="29.7" rx="3" fill="#14cddc"/>
<text x="713.5" y="29.5" font-size="26" font-weight="bold" fill="#111" stroke="#111" stroke-width="0.8" textLength="17.5" lengthAdjust="spacingAndGlyphs">D</text>
<text x="766.4" y="28.6" font-size="21" fill="#fff" stroke="#fff" stroke-width="0.2" textLength="55.1" lengthAdjust="spacing">0.00s</text>
<rect x="858" y="6.3" width="25.1" height="28.7" rx="3" fill="#14cddc"/>
<text x="862.5" y="29.5" font-size="26" font-weight="bold" fill="#111" stroke="#111" stroke-width="0.8" textLength="16" lengthAdjust="spacingAndGlyphs">T</text>
<text x="889.4" y="30.9" font-size="21" fill="#f0ea00" stroke="#f0ea00" stroke-width="0.15" textLength="72.8" lengthAdjust="spacing">800mV</text>
<!-- bottom bar -->
<rect x="19.9" y="560.5" width="254.2" height="46" rx="2" fill="#f8f700"/>
<text x="30" y="597.2" font-size="37" font-weight="bold" fill="#111" stroke="#111" stroke-width="0.9" textLength="14.5" lengthAdjust="spacingAndGlyphs">1</text>
<text x="49.5" y="597.2" font-size="32" font-weight="bold" fill="#111" stroke="#111" stroke-width="0.7" textLength="37.5" lengthAdjust="spacingAndGlyphs">DC</text>
<text x="233.3" y="597.2" font-size="29" fill="#111" textLength="37" lengthAdjust="spacingAndGlyphs">5V</text>
<rect x="282.8" y="560.8" width="253.6" height="45.8" rx="2" fill="#00f400"/>
<text x="289" y="597.1" font-size="39" fill="#111" stroke="#111" stroke-width="0.6" textLength="20.5" lengthAdjust="spacingAndGlyphs">2</text>
<text x="311.5" y="597.1" font-size="31.5" fill="#111" stroke="#111" stroke-width="0.8" textLength="38" lengthAdjust="spacingAndGlyphs">DC</text>
<text x="496.2" y="597.1" font-size="29" fill="#111" textLength="36.6" lengthAdjust="spacingAndGlyphs">5V</text>
<rect x="544.8" y="560.2" width="254.8" height="46" rx="2" fill="#fa006e"/>
<text x="550.5" y="596.3" font-size="37" fill="#111" textLength="31.5" lengthAdjust="spacingAndGlyphs">G</text>
<path d="M598.7 573V564.8H620.6V578H641.6V569.7" stroke="#111" stroke-width="3" fill="none"/>
<text x="673.8" y="580.2" font-size="21" font-weight="bold" fill="#111" stroke="#111" stroke-width="0.3" textLength="93" lengthAdjust="spacingAndGlyphs">1.00KHz</text>
<text x="597" y="601" font-size="21" font-weight="bold" fill="#111" stroke="#111" stroke-width="0.3" textLength="91.8" lengthAdjust="spacingAndGlyphs">1.50Vpp</text>
<text x="704.7" y="601" font-size="21" font-weight="bold" fill="#111" stroke="#111" stroke-width="0.3" textLength="45" lengthAdjust="spacingAndGlyphs">0mv</text>
<path d="M831.2 579.4H817Q807 579.4 807 590Q807 600.6 817 600.6H827.6Z" fill="#2f66e0"/>
<path d="M833 582.7H840.6L837.6 598.3H830Z" fill="#fff"/>
<path d="M834.6 585.5h3.2l-0.8 4.3h-3.2zM833.4 592h3.2l-0.8 4h-3.2z" fill="#000"/>
</svg>
</body></html>
